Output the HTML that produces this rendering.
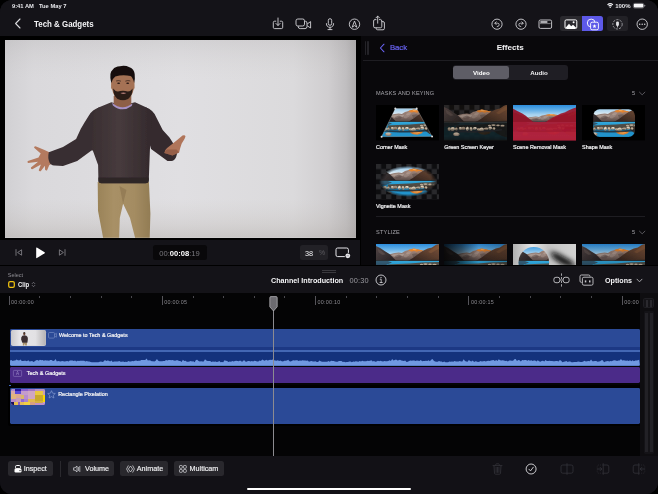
<!DOCTYPE html>
<html lang="en">
<head>
<meta charset="utf-8">
<title>Tech &amp; Gadgets</title>
<style>
html,body{margin:0;padding:0;background:#000;}
body{width:658px;height:494px;overflow:hidden;position:relative;font-family:"Liberation Sans",sans-serif;color:#fff;}
#screen{position:absolute;left:0;top:0;width:658px;height:494px;background:#121116;border-radius:12px;overflow:hidden;will-change:transform;}
.abs{position:absolute;}
.t{position:absolute;white-space:nowrap;line-height:1;}
svg{position:absolute;overflow:visible;}
/* regions */
#topbar{left:0;top:0;width:658px;height:36px;background:#141318;}
#viewerwrap{left:0;top:36px;width:360px;height:204px;background:#000;}
#viewer{left:4.5px;top:40px;width:351.5px;height:197.7px;background:#d9d9db;overflow:hidden;}
#ctrl{left:0;top:239.8px;width:360px;height:25px;background:#141318;}
#panel{left:361px;top:36px;width:297px;height:228.7px;background:#09080b;overflow:hidden;}
#split{left:360px;top:36px;width:1px;height:230px;background:#000;}
#tlhead{left:0;top:266.2px;width:658px;height:27.3px;background:#141318;}
#gap1{left:0;top:264.7px;width:658px;height:1.6px;background:#000;}
#tl{left:0;top:293px;width:658px;height:163.4px;background:#040405;}
#bottom{left:0;top:456.4px;width:658px;height:37.6px;background:#121116;}
.btn{position:absolute;background:#29282d;border-radius:2.5px;height:15px;top:461px;}
.btn .t{font-size:7.2px;top:4.3px;color:#f2f2f4;-webkit-text-stroke:0.15px #f2f2f4;}
.lbl{font-size:5.45px;color:#f0f0f2;font-weight:normal;-webkit-text-stroke:0.22px #f0f0f2;}
.sec{font-size:5.6px;color:#a6a5ab;letter-spacing:0.18px;}
.tick{position:absolute;background:#55545a;width:1px;}
.tc{font-size:5.4px;color:#8b8a90;letter-spacing:0.25px;}
</style>
</head>
<body>
<div id="screen">
<div id="topbar" class="abs"></div>
<div id="viewerwrap" class="abs"></div>
<div id="viewer" class="abs"><!--VIEWER-->
<svg style="left:0;top:0" width="351.5" height="197.7" viewBox="4.5 40 351.5 197.7">
<defs>
<linearGradient id="vbg" x1="0" y1="0" x2="1" y2="0"><stop offset="0" stop-color="#d1d0d3"/><stop offset="0.08" stop-color="#dad9dc"/><stop offset="0.5" stop-color="#e0dfe2"/><stop offset="0.82" stop-color="#dbdadc"/><stop offset="0.92" stop-color="#d0ced0"/><stop offset="0.97" stop-color="#c0bec0"/><stop offset="1" stop-color="#adabac"/></linearGradient>
<linearGradient id="vfl" x1="0" y1="0" x2="0" y2="1"><stop offset="0" stop-color="#9a9696" stop-opacity="0.18"/><stop offset="0.2" stop-color="#c8c4c0" stop-opacity="0"/><stop offset="0.8" stop-color="#c8c4c0" stop-opacity="0"/><stop offset="0.93" stop-color="#b8b2ac" stop-opacity="0.25"/><stop offset="1" stop-color="#aaa49e" stop-opacity="0.4"/></linearGradient>
<linearGradient id="swt" x1="0" y1="0" x2="1" y2="0"><stop offset="0" stop-color="#3a2f32"/><stop offset="0.45" stop-color="#473b3d"/><stop offset="1" stop-color="#33292c"/></linearGradient>
<linearGradient id="pnt" x1="0" y1="0" x2="1" y2="0"><stop offset="0" stop-color="#9a8358"/><stop offset="0.3" stop-color="#a89066"/><stop offset="0.7" stop-color="#a48c62"/><stop offset="1" stop-color="#927c54"/></linearGradient>
<filter id="bl" x="-5%" y="-5%" width="110%" height="110%"><feGaussianBlur stdDeviation="0.45"/></filter>
</defs>
<rect x="4.5" y="40" width="351.5" height="197.7" fill="url(#vbg)"/>
<rect x="4.5" y="40" width="351.5" height="197.7" fill="url(#vfl)"/>
<g filter="url(#bl)">
<!-- pants -->
<path d="M97.2 182 H148.4 L149.9 213.7 L149.2 237.7 H134.6 L129.5 218 L122.6 203.8 L119.3 218 L118.6 237.7 H102.6 L97.5 210.8 Z" fill="url(#pnt)"/>
<path d="M119 186 L122.6 203.8 L126 190 Z" fill="#86704c" opacity="0.55"/>
<!-- left hand -->
<path d="M49.4 152.4 L44 150 L35 146.2 Q33.2 146.2 33.6 147.8 L40.2 153.4 L38 157.4 L27.4 161 Q26.2 162.2 27.6 163 L37.6 161.8 L30.4 167.6 Q30.2 169.4 31.8 169.2 L40.4 164.6 L38.2 170.2 Q38.8 171.8 40.2 171.2 L44.4 165.8 L44.6 169.8 Q45.6 171 46.6 170.2 L48.8 165 L52.4 163.2 Z" fill="#b47a5e"/>
<!-- arms -->
<path d="M99 107.2 Q91.6 109.6 88.4 115.5 L84 122.4 L80.2 129 L75.6 139 L62.5 147 L48.3 152.3 Q47 158 49 162.6 Q50.4 165.6 54 165.4 L62.5 166 L76.7 161 L91 150.5 L97 150 Z" fill="#392e31"/>
<path d="M145 107.2 Q152.8 109.8 155.6 117 L162.2 130 L169 137.4 L176.6 149.6 Q177.4 153 175.6 157 Q173.6 161.6 170 161 L167 161 L150.6 149 L148 140 Z" fill="#342a2d"/>
<!-- right hand -->
<path d="M172 155.4 L163.8 153 Q164.4 149.6 166.6 148 L171.4 144.2 L176.4 140.2 L182 135.4 Q184.8 134.6 185 136.6 L184 139 L181.2 143.6 L179.6 148.4 L178.6 152.6 Z" fill="#b0745a"/>
<path d="M172 155.4 L163.8 153 Q164.6 150.6 166.6 149.4 L176 149.4 L178.6 152.6 Z" fill="#86523e" opacity="0.6"/>
<!-- torso -->
<path d="M110.8 102.3 Q122.5 106 134.5 102.3 L146 107.4 Q151.4 110.4 152 117 L149.4 150 L148.3 180 Q148.3 183.2 145 183.2 H101 Q97.7 183.2 97.9 180 L97.6 165 L91.4 148 L92.8 117 Q92.8 110.4 98 107.4 Z" fill="url(#swt)"/>
<path d="M97.9 177.6 H148.3 V180 Q148.3 183.2 145 183.2 H101 Q97.7 183.2 97.9 180 Z" fill="#2e2528"/>
<!-- neck + collar -->
<path d="M113.2 96 H130.8 V105 Q122 110 113.2 105 Z" fill="#8e5e46"/>
<path d="M111.6 102.8 Q121.6 111.4 132 103.6 L131.2 106 Q121.6 113 112.4 105.4 Z" fill="#a892c6"/>
<!-- head -->
<path d="M110.6 84 Q110.2 74 122.4 73.4 Q134.4 74 134 84 Q134.6 88 133 90 Q131.6 97 126.6 99.6 Q122.4 101 118 99.6 Q113.2 97 111.8 90 Q110 88 110.6 84 Z" fill="#a57254"/>
<path d="M112.6 88.6 Q112.8 96 117 99 Q122.4 101.4 127.6 99 Q132 96 132.2 88.6 Q130.4 91.4 127.4 91.4 Q122.4 90 117.4 91.4 Q114.4 91.4 112.6 88.6 Z" fill="#2b1d19"/>
<path d="M110.8 83 Q108 72.4 112.4 69.4 Q114.6 66.4 119.4 66.2 Q124.6 65 129 67.2 Q133.6 69 134.2 74 Q134.8 78.6 133.6 83 Q132.6 77.8 130 76 Q122.4 74.4 114.8 76.4 Q111.8 78.4 110.8 83 Z" fill="#17100f"/>
<ellipse cx="118.1" cy="83.2" rx="1.5" ry="0.75" fill="#2a1a16"/>
<ellipse cx="127.2" cy="83.2" rx="1.5" ry="0.75" fill="#2a1a16"/>
<path d="M115.6 81 Q118 80 120.4 81.2 M124.8 81.2 Q127.4 80 129.8 81" stroke="#1c1210" stroke-width="0.6" fill="none"/>
<path d="M120 93 Q122.8 92 125.8 93 Q122.8 95 120 93 Z" fill="#b07a74"/>
</g>
</svg>
<!--/VIEWER--></div>
<div id="ctrl" class="abs"></div>
<div id="panel" class="abs"><!--PANEL-->
<svg width="0" height="0" style="left:0;top:0"><defs>
<linearGradient id="mSky" x1="0" y1="0" x2="0" y2="1"><stop offset="0" stop-color="#2a8cdc"/><stop offset="0.3" stop-color="#64b0e6"/><stop offset="0.55" stop-color="#a6d2ee"/><stop offset="1" stop-color="#d6e8f2"/></linearGradient>
<linearGradient id="mSkyP" x1="0" y1="0" x2="0" y2="1"><stop offset="0" stop-color="#6cb4e8"/><stop offset="0.25" stop-color="#a8d2ee"/><stop offset="0.5" stop-color="#d8e8f2"/><stop offset="1" stop-color="#eef2f4"/></linearGradient>
<linearGradient id="mL" x1="0" y1="0" x2="1" y2="1"><stop offset="0" stop-color="#514444"/><stop offset="0.5" stop-color="#3a3233"/><stop offset="1" stop-color="#221d1e"/></linearGradient>
<linearGradient id="mR" x1="1" y1="0" x2="0.2" y2="1"><stop offset="0" stop-color="#7c5238"/><stop offset="0.5" stop-color="#5c3e2e"/><stop offset="1" stop-color="#30221e"/></linearGradient>
<linearGradient id="mC" x1="0" y1="0" x2="0" y2="1"><stop offset="0" stop-color="#a68a7e"/><stop offset="0.55" stop-color="#88726a"/><stop offset="1" stop-color="#4c403e"/></linearGradient>
<linearGradient id="mLake" x1="0" y1="0" x2="0" y2="1"><stop offset="0" stop-color="#32aade"/><stop offset="0.16" stop-color="#2a9cd0"/><stop offset="0.3" stop-color="#1a6a94"/><stop offset="0.5" stop-color="#2090c8"/><stop offset="0.76" stop-color="#2294cc"/><stop offset="0.9" stop-color="#14608c"/><stop offset="1" stop-color="#0a2438"/></linearGradient>
<filter id="mB" x="-3%" y="-3%" width="106%" height="106%"><feGaussianBlur stdDeviation="0.25"/></filter>
<pattern id="chk" width="10.14" height="10.12" patternUnits="userSpaceOnUse"><rect width="10.14" height="10.12" fill="#0d0d0f"/><rect width="5.07" height="5.06" fill="#29292c"/><rect x="5.07" y="5.06" width="5.07" height="5.06" fill="#29292c"/></pattern>
</defs></svg>
<div class="abs" style="left:3.9px;top:5.3px;width:1.6px;height:13.6px;background:#242328;border-radius:0.8px;"></div>
<div class="abs" style="left:6.3px;top:5.3px;width:1.6px;height:13.6px;background:#242328;border-radius:0.8px;"></div>
<svg style="left:18.2px;top:7.2px" width="7" height="10" viewBox="0 0 7 10"><path d="M5 1.2 L1.4 5 L5 8.8" fill="none" stroke="#6a64f5" stroke-width="1.05" stroke-linecap="round" stroke-linejoin="round"/></svg>
<div class="t" style="left:28.9px;top:8.3px;font-size:7.75px;color:#6a64f5;-webkit-text-stroke:0.2px #6a64f5;">Back</div>
<div class="t" style="left:135.7px;top:8.2px;font-size:8.1px;font-weight:bold;color:#f4f4f6;">Effects</div>
<div class="abs" style="left:1.5px;top:23.7px;width:296px;height:0.7px;background:#1e1d22;"></div>
<div class="abs" style="left:91.7px;top:29.1px;width:115.4px;height:14.9px;background:#1f1e24;border-radius:3px;"></div>
<div class="abs" style="left:92.4px;top:30px;width:55.4px;height:13.2px;background:#5e5d66;border-radius:2.4px;"></div>
<div class="t" style="left:92.3px;top:34px;width:56px;text-align:center;font-size:6.2px;font-weight:bold;color:#fff;">Video</div>
<div class="t" style="left:149.5px;top:34px;width:57px;text-align:center;font-size:6.2px;font-weight:bold;color:#f0f0f2;">Audio</div>
<div class="t sec" style="left:15px;top:54.6px;">MASKS AND KEYING</div>
<div class="t sec" style="left:271px;top:54.6px;">5</div>
<svg style="left:277px;top:55.2px" width="8" height="5" viewBox="0 0 8 5"><path d="M1.5 1.2 L4.2 3.8 L6.9 1.2" fill="none" stroke="#7a7980" stroke-width="0.7" stroke-linecap="round" stroke-linejoin="round"/></svg>
<div class="abs" style="left:15px;top:179.6px;width:269.4px;height:0.7px;background:#1e1d22;"></div>
<div class="t sec" style="left:15px;top:193.5px;">STYLIZE</div>
<div class="t sec" style="left:271px;top:193.5px;">5</div>
<svg style="left:277px;top:194.1px" width="8" height="5" viewBox="0 0 8 5"><path d="M1.5 1.2 L4.2 3.8 L6.9 1.2" fill="none" stroke="#7a7980" stroke-width="0.7" stroke-linecap="round" stroke-linejoin="round"/></svg>



<svg style="left:15px;top:69.3px;overflow:hidden" width="63.2" height="35.4" viewBox="0 0 63.2 35.4"><rect width="63.2" height="35.4" fill="#000"/><clipPath id="cm"><path d="M19.3 3.6 L40.7 3.6 L56.1 31.4 L5.6 31.7 Z"/></clipPath><g clip-path="url(#cm)"><g filter="url(#mB)"><rect width="63.2" height="17.5" fill="url(#mSkyP)"/><path d="M10 11 L14.6 10.1 L18.7 9.1 L22.8 8.4 L25.9 9.1 L29 7 L33.2 5.7 L37.8 4.6 L42.5 5.6 L46.6 6.5 L49.5 7.6 L52 9 L54 17.5 H10 Z" fill="url(#mC)"/>
<path d="M15 11 L18.7 9.8 L22.6 9.4 L25.6 10 L28.6 9.4 L27 12 L24 11.6 L21 13 L17.4 12.4 Z" fill="#b5a59c" opacity="0.7"/>
<path d="M27.4 11 L31 8.6 L35 8.8 L33 11.6 L30 13.4 L28 13 Z" fill="#a4928a" opacity="0.55"/>
<path d="M36 10 L40 9.2 L44 10 L41 12.4 L37 13 Z" fill="#5c4c48" opacity="0.6"/>
<path d="M19 12 L23 10.6 L26 12.2 L24 14.4 L20 14.6 Z" fill="#5a4a48" opacity="0.55"/>
<path d="M30 9 L33 7 L36 7.8 L34 9.6 L31 10.6 Z" fill="#c0a89c" opacity="0.45"/>
<path d="M40 7.8 L44 7.4 L47 8.2 L44 10 L41 9.6 Z" fill="#a07860" opacity="0.6"/>
<path d="M32.4 6 L33.6 5.6 L37.8 4.6 L42.5 5.6 L46.6 6.5 L47.6 7.2 L45.6 7.4 L43 7 L40.6 7.7 L38.2 7 L35.6 7.5 L33.8 7 Z" fill="#e4832f"/>
<path d="M36.4 5.2 L37.8 4.8 L41 5.5 L39.6 6.2 L37.4 6.1 Z" fill="#f4a858"/>
<path d="M0 1.9 L4.2 3.9 L9.4 7.5 L13.5 10.1 L17.7 14.3 L20.3 16.8 L20.3 17.5 H0 Z" fill="url(#mL)"/>
<path d="M1.6 4.6 L5.6 7 L9.6 10.2 L6.6 11 L2.6 8.6 Z" fill="#6a5a56" opacity="0.5"/>
<path d="M63.2 0 L60 0.8 L55.9 3.4 L51.8 4.4 L48.6 6 L46.6 7 L43 9.6 L39.6 12 L36.4 14.2 L33.2 16.3 L31 17 L31 17.5 H63.2 Z" fill="url(#mR)"/>
<path d="M60 2.6 L56 5 L52 8 L55 9.2 L59 6.8 L63.2 4.8 V1.6 Z" fill="#90603e" opacity="0.45"/>
<path d="M0 15.9 L20 16.3 L34 16.4 L63.2 15.8 V17.6 H0 Z" fill="#2b2523"/><g><rect x="0" y="16.9" width="63.2" height="18.5" fill="url(#mLake)"/>
<path d="M0 17 L12 17 L16 18.6 L10 21 L0 22 Z" fill="#32262a" opacity="0.6"/>
<path d="M12 20.6 L22 20 L34 19.4 L46 18.6 L63.2 18 V24 H12 Z" fill="#54463a" opacity="0.92"/>
<path d="M46 22 H63.2 V32.6 L58 31 L53 28.6 L49 25.6 Z" fill="#3a2c24" opacity="0.92"/>
<path d="M33.6 26.6 L37 26.2 L42 26.3 L47.4 26.6 L45.4 28.6 L41.4 29.8 L37.4 29.2 L34.8 28 Z" fill="#e0802e"/>
<path d="M36.4 26.8 L41 26.6 L44.4 27.2 L41.4 28.5 L38.2 28.3 Z" fill="#f2a450"/></g><path d="M3 24.8 L10 25.2 L20 25.6 L30 25.8 L40 25.6 L50 24.8 L58 23.8 L58 25.4 L50 26.6 L40 27.2 L32 27.6 L24 27.4 L14 27 L6 26.4 Z" fill="#20262c" opacity="0.8"/>
<ellipse cx="5.18" cy="24.06" rx="1.50" ry="1.72" fill="#a89884" transform="rotate(-11 5.2 24.06)"/>
<ellipse cx="4.90" cy="25.09" rx="1.35" ry="0.69" fill="#4e443c" opacity="0.75"/>
<ellipse cx="8.60" cy="23.91" rx="2.25" ry="1.83" fill="#cfc0aa" transform="rotate(-11 8.6 23.91)"/>
<ellipse cx="8.30" cy="25.01" rx="2.03" ry="0.73" fill="#4e443c" opacity="0.75"/>
<ellipse cx="12.26" cy="24.00" rx="1.30" ry="1.43" fill="#b4a48e" transform="rotate(12 12.6 24.00)"/>
<ellipse cx="12.30" cy="24.86" rx="1.17" ry="0.57" fill="#4e443c" opacity="0.75"/>
<ellipse cx="16.40" cy="23.35" rx="1.58" ry="1.31" fill="#d8cab4" transform="rotate(10 16.0 23.35)"/>
<ellipse cx="15.70" cy="24.14" rx="1.42" ry="0.52" fill="#4e443c" opacity="0.75"/>
<ellipse cx="19.26" cy="23.34" rx="2.35" ry="1.65" fill="#9e8e7c" transform="rotate(-0 19.4 23.34)"/>
<ellipse cx="19.10" cy="24.33" rx="2.12" ry="0.66" fill="#4e443c" opacity="0.75"/>
<ellipse cx="23.32" cy="23.74" rx="1.44" ry="1.96" fill="#e2d6c2" transform="rotate(13 23.6 23.74)"/>
<ellipse cx="23.30" cy="24.92" rx="1.30" ry="0.78" fill="#4e443c" opacity="0.75"/>
<ellipse cx="27.04" cy="23.84" rx="1.45" ry="1.94" fill="#cbbca6" transform="rotate(-6 27.0 23.84)"/>
<ellipse cx="26.70" cy="25.00" rx="1.30" ry="0.77" fill="#4e443c" opacity="0.75"/>
<ellipse cx="30.89" cy="23.34" rx="1.88" ry="1.27" fill="#e8ddca" transform="rotate(-11 30.6 23.34)"/>
<ellipse cx="30.30" cy="24.11" rx="1.69" ry="0.51" fill="#4e443c" opacity="0.75"/>
<ellipse cx="34.92" cy="24.46" rx="2.24" ry="1.29" fill="#bfae98" transform="rotate(10 34.6 24.46)"/>
<ellipse cx="34.30" cy="25.24" rx="2.01" ry="0.52" fill="#4e443c" opacity="0.75"/>
<ellipse cx="37.70" cy="24.18" rx="2.22" ry="1.62" fill="#d6c8b2" transform="rotate(-1 38.0 24.18)"/>
<ellipse cx="37.70" cy="25.15" rx="1.99" ry="0.65" fill="#4e443c" opacity="0.75"/>
<ellipse cx="42.11" cy="23.71" rx="2.29" ry="1.28" fill="#b0a08c" transform="rotate(-4 41.8 23.71)"/>
<ellipse cx="41.50" cy="24.48" rx="2.06" ry="0.51" fill="#4e443c" opacity="0.75"/>
<ellipse cx="46.20" cy="23.06" rx="1.74" ry="1.51" fill="#dcd0bc" transform="rotate(-5 45.8 23.06)"/>
<ellipse cx="45.50" cy="23.97" rx="1.56" ry="0.60" fill="#4e443c" opacity="0.75"/>
<ellipse cx="49.99" cy="23.46" rx="1.33" ry="1.18" fill="#c4b49e" transform="rotate(-0 49.6 23.46)"/>
<ellipse cx="49.30" cy="24.17" rx="1.20" ry="0.47" fill="#4e443c" opacity="0.75"/>
<ellipse cx="45.5" cy="20.6" rx="1.6" ry="0.9" fill="#b8a894"/>
<ellipse cx="49.5" cy="20.1" rx="2.2" ry="0.9" fill="#b8a894"/>
<ellipse cx="54" cy="20.3" rx="1.8" ry="0.9" fill="#b8a894"/>
<ellipse cx="58.5" cy="20.7" rx="2.1" ry="0.9" fill="#b8a894"/>
<ellipse cx="12.4" cy="29.2" rx="3.2" ry="1.8" fill="#8c7e72"/><ellipse cx="12.2" cy="28.7" rx="2.5" ry="1.1" fill="#c4b4a0"/></g></g><path d="M19.3 3.6 L40.7 3.6 L56.1 31.4 L5.6 31.7 Z" fill="none" stroke="#cfcfcf" stroke-width="0.3"/><circle cx="19.3" cy="3.6" r="1" fill="#dcdcdc"/><circle cx="40.7" cy="3.6" r="1" fill="#dcdcdc"/><circle cx="56.1" cy="31.4" r="1" fill="#dcdcdc"/><circle cx="5.6" cy="31.7" r="1" fill="#dcdcdc"/></svg>
<div class="t lbl" style="left:15px;top:108.8px;">Corner Mask</div>
<svg style="left:83.2px;top:69.3px;overflow:hidden" width="63.2" height="35.4" viewBox="0 0 63.2 35.4"><rect width="63.2" height="35.4" fill="url(#chk)"/><rect y="16.9" width="63.2" height="18.5" fill="#0e1416" opacity="0.9"/><g filter="url(#mB)"><path d="M10 11 L14.6 10.1 L18.7 9.1 L22.8 8.4 L25.9 9.1 L29 7 L33.2 5.7 L37.8 4.6 L42.5 5.6 L46.6 6.5 L49.5 7.6 L52 9 L54 17.5 H10 Z" fill="url(#mC)"/>
<path d="M15 11 L18.7 9.8 L22.6 9.4 L25.6 10 L28.6 9.4 L27 12 L24 11.6 L21 13 L17.4 12.4 Z" fill="#b5a59c" opacity="0.7"/>
<path d="M27.4 11 L31 8.6 L35 8.8 L33 11.6 L30 13.4 L28 13 Z" fill="#a4928a" opacity="0.55"/>
<path d="M36 10 L40 9.2 L44 10 L41 12.4 L37 13 Z" fill="#5c4c48" opacity="0.6"/>
<path d="M19 12 L23 10.6 L26 12.2 L24 14.4 L20 14.6 Z" fill="#5a4a48" opacity="0.55"/>
<path d="M30 9 L33 7 L36 7.8 L34 9.6 L31 10.6 Z" fill="#c0a89c" opacity="0.45"/>
<path d="M40 7.8 L44 7.4 L47 8.2 L44 10 L41 9.6 Z" fill="#a07860" opacity="0.6"/>
<path d="M32.4 6 L33.6 5.6 L37.8 4.6 L42.5 5.6 L46.6 6.5 L47.6 7.2 L45.6 7.4 L43 7 L40.6 7.7 L38.2 7 L35.6 7.5 L33.8 7 Z" fill="#e4832f"/>
<path d="M36.4 5.2 L37.8 4.8 L41 5.5 L39.6 6.2 L37.4 6.1 Z" fill="#f4a858"/>
<path d="M0 1.9 L4.2 3.9 L9.4 7.5 L13.5 10.1 L17.7 14.3 L20.3 16.8 L20.3 17.5 H0 Z" fill="url(#mL)"/>
<path d="M1.6 4.6 L5.6 7 L9.6 10.2 L6.6 11 L2.6 8.6 Z" fill="#6a5a56" opacity="0.5"/>
<path d="M63.2 0 L60 0.8 L55.9 3.4 L51.8 4.4 L48.6 6 L46.6 7 L43 9.6 L39.6 12 L36.4 14.2 L33.2 16.3 L31 17 L31 17.5 H63.2 Z" fill="url(#mR)"/>
<path d="M60 2.6 L56 5 L52 8 L55 9.2 L59 6.8 L63.2 4.8 V1.6 Z" fill="#90603e" opacity="0.45"/>
<path d="M0 15.9 L20 16.3 L34 16.4 L63.2 15.8 V17.6 H0 Z" fill="#2b2523"/><g opacity="0.13"><rect x="0" y="16.9" width="63.2" height="18.5" fill="url(#mLake)"/>
<path d="M0 17 L12 17 L16 18.6 L10 21 L0 22 Z" fill="#32262a" opacity="0.6"/>
<path d="M12 20.6 L22 20 L34 19.4 L46 18.6 L63.2 18 V24 H12 Z" fill="#54463a" opacity="0.92"/>
<path d="M46 22 H63.2 V32.6 L58 31 L53 28.6 L49 25.6 Z" fill="#3a2c24" opacity="0.92"/>
<path d="M33.6 26.6 L37 26.2 L42 26.3 L47.4 26.6 L45.4 28.6 L41.4 29.8 L37.4 29.2 L34.8 28 Z" fill="#e0802e"/>
<path d="M36.4 26.8 L41 26.6 L44.4 27.2 L41.4 28.5 L38.2 28.3 Z" fill="#f2a450"/></g><path d="M3 24.8 L10 25.2 L20 25.6 L30 25.8 L40 25.6 L50 24.8 L58 23.8 L58 25.4 L50 26.6 L40 27.2 L32 27.6 L24 27.4 L14 27 L6 26.4 Z" fill="#20262c" opacity="0.8"/>
<ellipse cx="5.18" cy="24.06" rx="1.50" ry="1.72" fill="#a89884" transform="rotate(-11 5.2 24.06)"/>
<ellipse cx="4.90" cy="25.09" rx="1.35" ry="0.69" fill="#4e443c" opacity="0.75"/>
<ellipse cx="8.60" cy="23.91" rx="2.25" ry="1.83" fill="#cfc0aa" transform="rotate(-11 8.6 23.91)"/>
<ellipse cx="8.30" cy="25.01" rx="2.03" ry="0.73" fill="#4e443c" opacity="0.75"/>
<ellipse cx="12.26" cy="24.00" rx="1.30" ry="1.43" fill="#b4a48e" transform="rotate(12 12.6 24.00)"/>
<ellipse cx="12.30" cy="24.86" rx="1.17" ry="0.57" fill="#4e443c" opacity="0.75"/>
<ellipse cx="16.40" cy="23.35" rx="1.58" ry="1.31" fill="#d8cab4" transform="rotate(10 16.0 23.35)"/>
<ellipse cx="15.70" cy="24.14" rx="1.42" ry="0.52" fill="#4e443c" opacity="0.75"/>
<ellipse cx="19.26" cy="23.34" rx="2.35" ry="1.65" fill="#9e8e7c" transform="rotate(-0 19.4 23.34)"/>
<ellipse cx="19.10" cy="24.33" rx="2.12" ry="0.66" fill="#4e443c" opacity="0.75"/>
<ellipse cx="23.32" cy="23.74" rx="1.44" ry="1.96" fill="#e2d6c2" transform="rotate(13 23.6 23.74)"/>
<ellipse cx="23.30" cy="24.92" rx="1.30" ry="0.78" fill="#4e443c" opacity="0.75"/>
<ellipse cx="27.04" cy="23.84" rx="1.45" ry="1.94" fill="#cbbca6" transform="rotate(-6 27.0 23.84)"/>
<ellipse cx="26.70" cy="25.00" rx="1.30" ry="0.77" fill="#4e443c" opacity="0.75"/>
<ellipse cx="30.89" cy="23.34" rx="1.88" ry="1.27" fill="#e8ddca" transform="rotate(-11 30.6 23.34)"/>
<ellipse cx="30.30" cy="24.11" rx="1.69" ry="0.51" fill="#4e443c" opacity="0.75"/>
<ellipse cx="34.92" cy="24.46" rx="2.24" ry="1.29" fill="#bfae98" transform="rotate(10 34.6 24.46)"/>
<ellipse cx="34.30" cy="25.24" rx="2.01" ry="0.52" fill="#4e443c" opacity="0.75"/>
<ellipse cx="37.70" cy="24.18" rx="2.22" ry="1.62" fill="#d6c8b2" transform="rotate(-1 38.0 24.18)"/>
<ellipse cx="37.70" cy="25.15" rx="1.99" ry="0.65" fill="#4e443c" opacity="0.75"/>
<ellipse cx="42.11" cy="23.71" rx="2.29" ry="1.28" fill="#b0a08c" transform="rotate(-4 41.8 23.71)"/>
<ellipse cx="41.50" cy="24.48" rx="2.06" ry="0.51" fill="#4e443c" opacity="0.75"/>
<ellipse cx="46.20" cy="23.06" rx="1.74" ry="1.51" fill="#dcd0bc" transform="rotate(-5 45.8 23.06)"/>
<ellipse cx="45.50" cy="23.97" rx="1.56" ry="0.60" fill="#4e443c" opacity="0.75"/>
<ellipse cx="49.99" cy="23.46" rx="1.33" ry="1.18" fill="#c4b49e" transform="rotate(-0 49.6 23.46)"/>
<ellipse cx="49.30" cy="24.17" rx="1.20" ry="0.47" fill="#4e443c" opacity="0.75"/>
<ellipse cx="45.5" cy="20.6" rx="1.6" ry="0.9" fill="#b8a894"/>
<ellipse cx="49.5" cy="20.1" rx="2.2" ry="0.9" fill="#b8a894"/>
<ellipse cx="54" cy="20.3" rx="1.8" ry="0.9" fill="#b8a894"/>
<ellipse cx="58.5" cy="20.7" rx="2.1" ry="0.9" fill="#b8a894"/>
<ellipse cx="12.4" cy="29.2" rx="3.2" ry="1.8" fill="#8c7e72"/><ellipse cx="12.2" cy="28.7" rx="2.5" ry="1.1" fill="#c4b4a0"/></g><rect width="63.2" height="35.4" fill="#2a1810" opacity="0.15"/></svg>
<div class="t lbl" style="left:83.2px;top:108.8px;">Green Screen Keyer</div>
<svg style="left:152px;top:69.3px;overflow:hidden" width="63.2" height="35.4" viewBox="0 0 63.2 35.4"><g filter="url(#mB)"><rect width="63.2" height="17.5" fill="url(#mSky)"/><g transform="translate(0 6) scale(1 0.65)"><path d="M10 11 L14.6 10.1 L18.7 9.1 L22.8 8.4 L25.9 9.1 L29 7 L33.2 5.7 L37.8 4.6 L42.5 5.6 L46.6 6.5 L49.5 7.6 L52 9 L54 17.5 H10 Z" fill="url(#mC)"/>
<path d="M15 11 L18.7 9.8 L22.6 9.4 L25.6 10 L28.6 9.4 L27 12 L24 11.6 L21 13 L17.4 12.4 Z" fill="#b5a59c" opacity="0.7"/>
<path d="M27.4 11 L31 8.6 L35 8.8 L33 11.6 L30 13.4 L28 13 Z" fill="#a4928a" opacity="0.55"/>
<path d="M36 10 L40 9.2 L44 10 L41 12.4 L37 13 Z" fill="#5c4c48" opacity="0.6"/>
<path d="M19 12 L23 10.6 L26 12.2 L24 14.4 L20 14.6 Z" fill="#5a4a48" opacity="0.55"/>
<path d="M30 9 L33 7 L36 7.8 L34 9.6 L31 10.6 Z" fill="#c0a89c" opacity="0.45"/>
<path d="M40 7.8 L44 7.4 L47 8.2 L44 10 L41 9.6 Z" fill="#a07860" opacity="0.6"/>
<path d="M32.4 6 L33.6 5.6 L37.8 4.6 L42.5 5.6 L46.6 6.5 L47.6 7.2 L45.6 7.4 L43 7 L40.6 7.7 L38.2 7 L35.6 7.5 L33.8 7 Z" fill="#e4832f"/>
<path d="M36.4 5.2 L37.8 4.8 L41 5.5 L39.6 6.2 L37.4 6.1 Z" fill="#f4a858"/>
<path d="M0 1.9 L4.2 3.9 L9.4 7.5 L13.5 10.1 L17.7 14.3 L20.3 16.8 L20.3 17.5 H0 Z" fill="url(#mL)"/>
<path d="M1.6 4.6 L5.6 7 L9.6 10.2 L6.6 11 L2.6 8.6 Z" fill="#6a5a56" opacity="0.5"/>
<path d="M63.2 0 L60 0.8 L55.9 3.4 L51.8 4.4 L48.6 6 L46.6 7 L43 9.6 L39.6 12 L36.4 14.2 L33.2 16.3 L31 17 L31 17.5 H63.2 Z" fill="url(#mR)"/>
<path d="M60 2.6 L56 5 L52 8 L55 9.2 L59 6.8 L63.2 4.8 V1.6 Z" fill="#90603e" opacity="0.45"/>
<path d="M0 15.9 L20 16.3 L34 16.4 L63.2 15.8 V17.6 H0 Z" fill="#2b2523"/></g><g><rect x="0" y="16.9" width="63.2" height="18.5" fill="url(#mLake)"/>
<path d="M0 17 L12 17 L16 18.6 L10 21 L0 22 Z" fill="#32262a" opacity="0.6"/>
<path d="M12 20.6 L22 20 L34 19.4 L46 18.6 L63.2 18 V24 H12 Z" fill="#54463a" opacity="0.92"/>
<path d="M46 22 H63.2 V32.6 L58 31 L53 28.6 L49 25.6 Z" fill="#3a2c24" opacity="0.92"/>
<path d="M33.6 26.6 L37 26.2 L42 26.3 L47.4 26.6 L45.4 28.6 L41.4 29.8 L37.4 29.2 L34.8 28 Z" fill="#e0802e"/>
<path d="M36.4 26.8 L41 26.6 L44.4 27.2 L41.4 28.5 L38.2 28.3 Z" fill="#f2a450"/></g><path d="M3 24.8 L10 25.2 L20 25.6 L30 25.8 L40 25.6 L50 24.8 L58 23.8 L58 25.4 L50 26.6 L40 27.2 L32 27.6 L24 27.4 L14 27 L6 26.4 Z" fill="#20262c" opacity="0.8"/>
<ellipse cx="5.18" cy="24.06" rx="1.50" ry="1.72" fill="#a89884" transform="rotate(-11 5.2 24.06)"/>
<ellipse cx="4.90" cy="25.09" rx="1.35" ry="0.69" fill="#4e443c" opacity="0.75"/>
<ellipse cx="8.60" cy="23.91" rx="2.25" ry="1.83" fill="#cfc0aa" transform="rotate(-11 8.6 23.91)"/>
<ellipse cx="8.30" cy="25.01" rx="2.03" ry="0.73" fill="#4e443c" opacity="0.75"/>
<ellipse cx="12.26" cy="24.00" rx="1.30" ry="1.43" fill="#b4a48e" transform="rotate(12 12.6 24.00)"/>
<ellipse cx="12.30" cy="24.86" rx="1.17" ry="0.57" fill="#4e443c" opacity="0.75"/>
<ellipse cx="16.40" cy="23.35" rx="1.58" ry="1.31" fill="#d8cab4" transform="rotate(10 16.0 23.35)"/>
<ellipse cx="15.70" cy="24.14" rx="1.42" ry="0.52" fill="#4e443c" opacity="0.75"/>
<ellipse cx="19.26" cy="23.34" rx="2.35" ry="1.65" fill="#9e8e7c" transform="rotate(-0 19.4 23.34)"/>
<ellipse cx="19.10" cy="24.33" rx="2.12" ry="0.66" fill="#4e443c" opacity="0.75"/>
<ellipse cx="23.32" cy="23.74" rx="1.44" ry="1.96" fill="#e2d6c2" transform="rotate(13 23.6 23.74)"/>
<ellipse cx="23.30" cy="24.92" rx="1.30" ry="0.78" fill="#4e443c" opacity="0.75"/>
<ellipse cx="27.04" cy="23.84" rx="1.45" ry="1.94" fill="#cbbca6" transform="rotate(-6 27.0 23.84)"/>
<ellipse cx="26.70" cy="25.00" rx="1.30" ry="0.77" fill="#4e443c" opacity="0.75"/>
<ellipse cx="30.89" cy="23.34" rx="1.88" ry="1.27" fill="#e8ddca" transform="rotate(-11 30.6 23.34)"/>
<ellipse cx="30.30" cy="24.11" rx="1.69" ry="0.51" fill="#4e443c" opacity="0.75"/>
<ellipse cx="34.92" cy="24.46" rx="2.24" ry="1.29" fill="#bfae98" transform="rotate(10 34.6 24.46)"/>
<ellipse cx="34.30" cy="25.24" rx="2.01" ry="0.52" fill="#4e443c" opacity="0.75"/>
<ellipse cx="37.70" cy="24.18" rx="2.22" ry="1.62" fill="#d6c8b2" transform="rotate(-1 38.0 24.18)"/>
<ellipse cx="37.70" cy="25.15" rx="1.99" ry="0.65" fill="#4e443c" opacity="0.75"/>
<ellipse cx="42.11" cy="23.71" rx="2.29" ry="1.28" fill="#b0a08c" transform="rotate(-4 41.8 23.71)"/>
<ellipse cx="41.50" cy="24.48" rx="2.06" ry="0.51" fill="#4e443c" opacity="0.75"/>
<ellipse cx="46.20" cy="23.06" rx="1.74" ry="1.51" fill="#dcd0bc" transform="rotate(-5 45.8 23.06)"/>
<ellipse cx="45.50" cy="23.97" rx="1.56" ry="0.60" fill="#4e443c" opacity="0.75"/>
<ellipse cx="49.99" cy="23.46" rx="1.33" ry="1.18" fill="#c4b49e" transform="rotate(-0 49.6 23.46)"/>
<ellipse cx="49.30" cy="24.17" rx="1.20" ry="0.47" fill="#4e443c" opacity="0.75"/>
<ellipse cx="45.5" cy="20.6" rx="1.6" ry="0.9" fill="#b8a894"/>
<ellipse cx="49.5" cy="20.1" rx="2.2" ry="0.9" fill="#b8a894"/>
<ellipse cx="54" cy="20.3" rx="1.8" ry="0.9" fill="#b8a894"/>
<ellipse cx="58.5" cy="20.7" rx="2.1" ry="0.9" fill="#b8a894"/>
<ellipse cx="12.4" cy="29.2" rx="3.2" ry="1.8" fill="#8c7e72"/><ellipse cx="12.2" cy="28.7" rx="2.5" ry="1.1" fill="#c4b4a0"/><path d="M0 3.7 L4.6 6.2 L9.2 8.5 L13 11 L16.8 14.6 L20 16.8 L26 16.9 L33.2 16.8 L36 14.8 L40 12.4 L44 10.6 L48 8.6 L52 7.4 L56 5.2 L60 3.6 L63.2 2.6 V35.4 H0 Z" fill="#a8182f" opacity="0.9"/><path d="M0 3.7 L4.6 6.2 L9.2 8.5 L13 11 L16.8 14.6 L20 16.8 H0 Z" fill="#7e1022" opacity="0.4"/><path d="M63.2 2.6 L56 5.2 L48 8.6 L40 12.4 L33.2 16.8 H63.2 Z" fill="#7e1022" opacity="0.25"/><rect y="17" width="63.2" height="18.4" fill="#b41a34" opacity="0.35"/><rect y="27" width="63.2" height="8.4" fill="#c83048" opacity="0.3"/></g></svg>
<div class="t lbl" style="left:152px;top:108.8px;">Scene Removal Mask</div>
<svg style="left:221px;top:69.3px;overflow:hidden" width="63.2" height="35.4" viewBox="0 0 63.2 35.4"><rect width="63.2" height="35.4" fill="#000"/><clipPath id="sm"><rect x="11.2" y="4.3" width="41.8" height="27.6" rx="6.5"/></clipPath><g clip-path="url(#sm)"><g filter="url(#mB)"><rect width="63.2" height="17.5" fill="url(#mSkyP)"/><path d="M10 11 L14.6 10.1 L18.7 9.1 L22.8 8.4 L25.9 9.1 L29 7 L33.2 5.7 L37.8 4.6 L42.5 5.6 L46.6 6.5 L49.5 7.6 L52 9 L54 17.5 H10 Z" fill="url(#mC)"/>
<path d="M15 11 L18.7 9.8 L22.6 9.4 L25.6 10 L28.6 9.4 L27 12 L24 11.6 L21 13 L17.4 12.4 Z" fill="#b5a59c" opacity="0.7"/>
<path d="M27.4 11 L31 8.6 L35 8.8 L33 11.6 L30 13.4 L28 13 Z" fill="#a4928a" opacity="0.55"/>
<path d="M36 10 L40 9.2 L44 10 L41 12.4 L37 13 Z" fill="#5c4c48" opacity="0.6"/>
<path d="M19 12 L23 10.6 L26 12.2 L24 14.4 L20 14.6 Z" fill="#5a4a48" opacity="0.55"/>
<path d="M30 9 L33 7 L36 7.8 L34 9.6 L31 10.6 Z" fill="#c0a89c" opacity="0.45"/>
<path d="M40 7.8 L44 7.4 L47 8.2 L44 10 L41 9.6 Z" fill="#a07860" opacity="0.6"/>
<path d="M32.4 6 L33.6 5.6 L37.8 4.6 L42.5 5.6 L46.6 6.5 L47.6 7.2 L45.6 7.4 L43 7 L40.6 7.7 L38.2 7 L35.6 7.5 L33.8 7 Z" fill="#e4832f"/>
<path d="M36.4 5.2 L37.8 4.8 L41 5.5 L39.6 6.2 L37.4 6.1 Z" fill="#f4a858"/>
<path d="M0 1.9 L4.2 3.9 L9.4 7.5 L13.5 10.1 L17.7 14.3 L20.3 16.8 L20.3 17.5 H0 Z" fill="url(#mL)"/>
<path d="M1.6 4.6 L5.6 7 L9.6 10.2 L6.6 11 L2.6 8.6 Z" fill="#6a5a56" opacity="0.5"/>
<path d="M63.2 0 L60 0.8 L55.9 3.4 L51.8 4.4 L48.6 6 L46.6 7 L43 9.6 L39.6 12 L36.4 14.2 L33.2 16.3 L31 17 L31 17.5 H63.2 Z" fill="url(#mR)"/>
<path d="M60 2.6 L56 5 L52 8 L55 9.2 L59 6.8 L63.2 4.8 V1.6 Z" fill="#90603e" opacity="0.45"/>
<path d="M0 15.9 L20 16.3 L34 16.4 L63.2 15.8 V17.6 H0 Z" fill="#2b2523"/><g><rect x="0" y="16.9" width="63.2" height="18.5" fill="url(#mLake)"/>
<path d="M0 17 L12 17 L16 18.6 L10 21 L0 22 Z" fill="#32262a" opacity="0.6"/>
<path d="M12 20.6 L22 20 L34 19.4 L46 18.6 L63.2 18 V24 H12 Z" fill="#54463a" opacity="0.92"/>
<path d="M46 22 H63.2 V32.6 L58 31 L53 28.6 L49 25.6 Z" fill="#3a2c24" opacity="0.92"/>
<path d="M33.6 26.6 L37 26.2 L42 26.3 L47.4 26.6 L45.4 28.6 L41.4 29.8 L37.4 29.2 L34.8 28 Z" fill="#e0802e"/>
<path d="M36.4 26.8 L41 26.6 L44.4 27.2 L41.4 28.5 L38.2 28.3 Z" fill="#f2a450"/></g><path d="M3 24.8 L10 25.2 L20 25.6 L30 25.8 L40 25.6 L50 24.8 L58 23.8 L58 25.4 L50 26.6 L40 27.2 L32 27.6 L24 27.4 L14 27 L6 26.4 Z" fill="#20262c" opacity="0.8"/>
<ellipse cx="5.18" cy="24.06" rx="1.50" ry="1.72" fill="#a89884" transform="rotate(-11 5.2 24.06)"/>
<ellipse cx="4.90" cy="25.09" rx="1.35" ry="0.69" fill="#4e443c" opacity="0.75"/>
<ellipse cx="8.60" cy="23.91" rx="2.25" ry="1.83" fill="#cfc0aa" transform="rotate(-11 8.6 23.91)"/>
<ellipse cx="8.30" cy="25.01" rx="2.03" ry="0.73" fill="#4e443c" opacity="0.75"/>
<ellipse cx="12.26" cy="24.00" rx="1.30" ry="1.43" fill="#b4a48e" transform="rotate(12 12.6 24.00)"/>
<ellipse cx="12.30" cy="24.86" rx="1.17" ry="0.57" fill="#4e443c" opacity="0.75"/>
<ellipse cx="16.40" cy="23.35" rx="1.58" ry="1.31" fill="#d8cab4" transform="rotate(10 16.0 23.35)"/>
<ellipse cx="15.70" cy="24.14" rx="1.42" ry="0.52" fill="#4e443c" opacity="0.75"/>
<ellipse cx="19.26" cy="23.34" rx="2.35" ry="1.65" fill="#9e8e7c" transform="rotate(-0 19.4 23.34)"/>
<ellipse cx="19.10" cy="24.33" rx="2.12" ry="0.66" fill="#4e443c" opacity="0.75"/>
<ellipse cx="23.32" cy="23.74" rx="1.44" ry="1.96" fill="#e2d6c2" transform="rotate(13 23.6 23.74)"/>
<ellipse cx="23.30" cy="24.92" rx="1.30" ry="0.78" fill="#4e443c" opacity="0.75"/>
<ellipse cx="27.04" cy="23.84" rx="1.45" ry="1.94" fill="#cbbca6" transform="rotate(-6 27.0 23.84)"/>
<ellipse cx="26.70" cy="25.00" rx="1.30" ry="0.77" fill="#4e443c" opacity="0.75"/>
<ellipse cx="30.89" cy="23.34" rx="1.88" ry="1.27" fill="#e8ddca" transform="rotate(-11 30.6 23.34)"/>
<ellipse cx="30.30" cy="24.11" rx="1.69" ry="0.51" fill="#4e443c" opacity="0.75"/>
<ellipse cx="34.92" cy="24.46" rx="2.24" ry="1.29" fill="#bfae98" transform="rotate(10 34.6 24.46)"/>
<ellipse cx="34.30" cy="25.24" rx="2.01" ry="0.52" fill="#4e443c" opacity="0.75"/>
<ellipse cx="37.70" cy="24.18" rx="2.22" ry="1.62" fill="#d6c8b2" transform="rotate(-1 38.0 24.18)"/>
<ellipse cx="37.70" cy="25.15" rx="1.99" ry="0.65" fill="#4e443c" opacity="0.75"/>
<ellipse cx="42.11" cy="23.71" rx="2.29" ry="1.28" fill="#b0a08c" transform="rotate(-4 41.8 23.71)"/>
<ellipse cx="41.50" cy="24.48" rx="2.06" ry="0.51" fill="#4e443c" opacity="0.75"/>
<ellipse cx="46.20" cy="23.06" rx="1.74" ry="1.51" fill="#dcd0bc" transform="rotate(-5 45.8 23.06)"/>
<ellipse cx="45.50" cy="23.97" rx="1.56" ry="0.60" fill="#4e443c" opacity="0.75"/>
<ellipse cx="49.99" cy="23.46" rx="1.33" ry="1.18" fill="#c4b49e" transform="rotate(-0 49.6 23.46)"/>
<ellipse cx="49.30" cy="24.17" rx="1.20" ry="0.47" fill="#4e443c" opacity="0.75"/>
<ellipse cx="45.5" cy="20.6" rx="1.6" ry="0.9" fill="#b8a894"/>
<ellipse cx="49.5" cy="20.1" rx="2.2" ry="0.9" fill="#b8a894"/>
<ellipse cx="54" cy="20.3" rx="1.8" ry="0.9" fill="#b8a894"/>
<ellipse cx="58.5" cy="20.7" rx="2.1" ry="0.9" fill="#b8a894"/>
<ellipse cx="12.4" cy="29.2" rx="3.2" ry="1.8" fill="#8c7e72"/><ellipse cx="12.2" cy="28.7" rx="2.5" ry="1.1" fill="#c4b4a0"/></g></g></svg>
<div class="t lbl" style="left:221px;top:108.8px;">Shape Mask</div>
<svg style="left:15px;top:128.4px;overflow:hidden" width="63.2" height="35.4" viewBox="0 0 63.2 35.4"><rect width="63.2" height="35.4" fill="url(#chk)"/><defs><radialGradient id="vg" cx="0.5" cy="0.5" r="0.5"><stop offset="0.8" stop-color="#fff"/><stop offset="1" stop-color="#fff" stop-opacity="0"/></radialGradient><mask id="vm"><ellipse cx="31.8" cy="17.4" rx="29" ry="15.6" fill="url(#vg)"/></mask></defs><g mask="url(#vm)"><g filter="url(#mB)"><rect width="63.2" height="17.5" fill="url(#mSkyP)"/><path d="M10 11 L14.6 10.1 L18.7 9.1 L22.8 8.4 L25.9 9.1 L29 7 L33.2 5.7 L37.8 4.6 L42.5 5.6 L46.6 6.5 L49.5 7.6 L52 9 L54 17.5 H10 Z" fill="url(#mC)"/>
<path d="M15 11 L18.7 9.8 L22.6 9.4 L25.6 10 L28.6 9.4 L27 12 L24 11.6 L21 13 L17.4 12.4 Z" fill="#b5a59c" opacity="0.7"/>
<path d="M27.4 11 L31 8.6 L35 8.8 L33 11.6 L30 13.4 L28 13 Z" fill="#a4928a" opacity="0.55"/>
<path d="M36 10 L40 9.2 L44 10 L41 12.4 L37 13 Z" fill="#5c4c48" opacity="0.6"/>
<path d="M19 12 L23 10.6 L26 12.2 L24 14.4 L20 14.6 Z" fill="#5a4a48" opacity="0.55"/>
<path d="M30 9 L33 7 L36 7.8 L34 9.6 L31 10.6 Z" fill="#c0a89c" opacity="0.45"/>
<path d="M40 7.8 L44 7.4 L47 8.2 L44 10 L41 9.6 Z" fill="#a07860" opacity="0.6"/>
<path d="M32.4 6 L33.6 5.6 L37.8 4.6 L42.5 5.6 L46.6 6.5 L47.6 7.2 L45.6 7.4 L43 7 L40.6 7.7 L38.2 7 L35.6 7.5 L33.8 7 Z" fill="#e4832f"/>
<path d="M36.4 5.2 L37.8 4.8 L41 5.5 L39.6 6.2 L37.4 6.1 Z" fill="#f4a858"/>
<path d="M0 1.9 L4.2 3.9 L9.4 7.5 L13.5 10.1 L17.7 14.3 L20.3 16.8 L20.3 17.5 H0 Z" fill="url(#mL)"/>
<path d="M1.6 4.6 L5.6 7 L9.6 10.2 L6.6 11 L2.6 8.6 Z" fill="#6a5a56" opacity="0.5"/>
<path d="M63.2 0 L60 0.8 L55.9 3.4 L51.8 4.4 L48.6 6 L46.6 7 L43 9.6 L39.6 12 L36.4 14.2 L33.2 16.3 L31 17 L31 17.5 H63.2 Z" fill="url(#mR)"/>
<path d="M60 2.6 L56 5 L52 8 L55 9.2 L59 6.8 L63.2 4.8 V1.6 Z" fill="#90603e" opacity="0.45"/>
<path d="M0 15.9 L20 16.3 L34 16.4 L63.2 15.8 V17.6 H0 Z" fill="#2b2523"/><g><rect x="0" y="16.9" width="63.2" height="18.5" fill="url(#mLake)"/>
<path d="M0 17 L12 17 L16 18.6 L10 21 L0 22 Z" fill="#32262a" opacity="0.6"/>
<path d="M12 20.6 L22 20 L34 19.4 L46 18.6 L63.2 18 V24 H12 Z" fill="#54463a" opacity="0.92"/>
<path d="M46 22 H63.2 V32.6 L58 31 L53 28.6 L49 25.6 Z" fill="#3a2c24" opacity="0.92"/>
<path d="M33.6 26.6 L37 26.2 L42 26.3 L47.4 26.6 L45.4 28.6 L41.4 29.8 L37.4 29.2 L34.8 28 Z" fill="#e0802e"/>
<path d="M36.4 26.8 L41 26.6 L44.4 27.2 L41.4 28.5 L38.2 28.3 Z" fill="#f2a450"/></g><path d="M3 24.8 L10 25.2 L20 25.6 L30 25.8 L40 25.6 L50 24.8 L58 23.8 L58 25.4 L50 26.6 L40 27.2 L32 27.6 L24 27.4 L14 27 L6 26.4 Z" fill="#20262c" opacity="0.8"/>
<ellipse cx="5.18" cy="24.06" rx="1.50" ry="1.72" fill="#a89884" transform="rotate(-11 5.2 24.06)"/>
<ellipse cx="4.90" cy="25.09" rx="1.35" ry="0.69" fill="#4e443c" opacity="0.75"/>
<ellipse cx="8.60" cy="23.91" rx="2.25" ry="1.83" fill="#cfc0aa" transform="rotate(-11 8.6 23.91)"/>
<ellipse cx="8.30" cy="25.01" rx="2.03" ry="0.73" fill="#4e443c" opacity="0.75"/>
<ellipse cx="12.26" cy="24.00" rx="1.30" ry="1.43" fill="#b4a48e" transform="rotate(12 12.6 24.00)"/>
<ellipse cx="12.30" cy="24.86" rx="1.17" ry="0.57" fill="#4e443c" opacity="0.75"/>
<ellipse cx="16.40" cy="23.35" rx="1.58" ry="1.31" fill="#d8cab4" transform="rotate(10 16.0 23.35)"/>
<ellipse cx="15.70" cy="24.14" rx="1.42" ry="0.52" fill="#4e443c" opacity="0.75"/>
<ellipse cx="19.26" cy="23.34" rx="2.35" ry="1.65" fill="#9e8e7c" transform="rotate(-0 19.4 23.34)"/>
<ellipse cx="19.10" cy="24.33" rx="2.12" ry="0.66" fill="#4e443c" opacity="0.75"/>
<ellipse cx="23.32" cy="23.74" rx="1.44" ry="1.96" fill="#e2d6c2" transform="rotate(13 23.6 23.74)"/>
<ellipse cx="23.30" cy="24.92" rx="1.30" ry="0.78" fill="#4e443c" opacity="0.75"/>
<ellipse cx="27.04" cy="23.84" rx="1.45" ry="1.94" fill="#cbbca6" transform="rotate(-6 27.0 23.84)"/>
<ellipse cx="26.70" cy="25.00" rx="1.30" ry="0.77" fill="#4e443c" opacity="0.75"/>
<ellipse cx="30.89" cy="23.34" rx="1.88" ry="1.27" fill="#e8ddca" transform="rotate(-11 30.6 23.34)"/>
<ellipse cx="30.30" cy="24.11" rx="1.69" ry="0.51" fill="#4e443c" opacity="0.75"/>
<ellipse cx="34.92" cy="24.46" rx="2.24" ry="1.29" fill="#bfae98" transform="rotate(10 34.6 24.46)"/>
<ellipse cx="34.30" cy="25.24" rx="2.01" ry="0.52" fill="#4e443c" opacity="0.75"/>
<ellipse cx="37.70" cy="24.18" rx="2.22" ry="1.62" fill="#d6c8b2" transform="rotate(-1 38.0 24.18)"/>
<ellipse cx="37.70" cy="25.15" rx="1.99" ry="0.65" fill="#4e443c" opacity="0.75"/>
<ellipse cx="42.11" cy="23.71" rx="2.29" ry="1.28" fill="#b0a08c" transform="rotate(-4 41.8 23.71)"/>
<ellipse cx="41.50" cy="24.48" rx="2.06" ry="0.51" fill="#4e443c" opacity="0.75"/>
<ellipse cx="46.20" cy="23.06" rx="1.74" ry="1.51" fill="#dcd0bc" transform="rotate(-5 45.8 23.06)"/>
<ellipse cx="45.50" cy="23.97" rx="1.56" ry="0.60" fill="#4e443c" opacity="0.75"/>
<ellipse cx="49.99" cy="23.46" rx="1.33" ry="1.18" fill="#c4b49e" transform="rotate(-0 49.6 23.46)"/>
<ellipse cx="49.30" cy="24.17" rx="1.20" ry="0.47" fill="#4e443c" opacity="0.75"/>
<ellipse cx="45.5" cy="20.6" rx="1.6" ry="0.9" fill="#b8a894"/>
<ellipse cx="49.5" cy="20.1" rx="2.2" ry="0.9" fill="#b8a894"/>
<ellipse cx="54" cy="20.3" rx="1.8" ry="0.9" fill="#b8a894"/>
<ellipse cx="58.5" cy="20.7" rx="2.1" ry="0.9" fill="#b8a894"/>
<ellipse cx="12.4" cy="29.2" rx="3.2" ry="1.8" fill="#8c7e72"/><ellipse cx="12.2" cy="28.7" rx="2.5" ry="1.1" fill="#c4b4a0"/></g></g></svg>
<div class="t lbl" style="left:15px;top:167.9px;">Vignette Mask</div>
<svg style="left:15px;top:207.8px;overflow:hidden" width="63.2" height="35.4" viewBox="0 0 63.2 35.4"><g filter="url(#mB)"><rect width="63.2" height="17.5" fill="url(#mSky)"/><path d="M10 11 L14.6 10.1 L18.7 9.1 L22.8 8.4 L25.9 9.1 L29 7 L33.2 5.7 L37.8 4.6 L42.5 5.6 L46.6 6.5 L49.5 7.6 L52 9 L54 17.5 H10 Z" fill="url(#mC)"/>
<path d="M15 11 L18.7 9.8 L22.6 9.4 L25.6 10 L28.6 9.4 L27 12 L24 11.6 L21 13 L17.4 12.4 Z" fill="#b5a59c" opacity="0.7"/>
<path d="M27.4 11 L31 8.6 L35 8.8 L33 11.6 L30 13.4 L28 13 Z" fill="#a4928a" opacity="0.55"/>
<path d="M36 10 L40 9.2 L44 10 L41 12.4 L37 13 Z" fill="#5c4c48" opacity="0.6"/>
<path d="M19 12 L23 10.6 L26 12.2 L24 14.4 L20 14.6 Z" fill="#5a4a48" opacity="0.55"/>
<path d="M30 9 L33 7 L36 7.8 L34 9.6 L31 10.6 Z" fill="#c0a89c" opacity="0.45"/>
<path d="M40 7.8 L44 7.4 L47 8.2 L44 10 L41 9.6 Z" fill="#a07860" opacity="0.6"/>
<path d="M32.4 6 L33.6 5.6 L37.8 4.6 L42.5 5.6 L46.6 6.5 L47.6 7.2 L45.6 7.4 L43 7 L40.6 7.7 L38.2 7 L35.6 7.5 L33.8 7 Z" fill="#e4832f"/>
<path d="M36.4 5.2 L37.8 4.8 L41 5.5 L39.6 6.2 L37.4 6.1 Z" fill="#f4a858"/>
<path d="M0 1.9 L4.2 3.9 L9.4 7.5 L13.5 10.1 L17.7 14.3 L20.3 16.8 L20.3 17.5 H0 Z" fill="url(#mL)"/>
<path d="M1.6 4.6 L5.6 7 L9.6 10.2 L6.6 11 L2.6 8.6 Z" fill="#6a5a56" opacity="0.5"/>
<path d="M63.2 0 L60 0.8 L55.9 3.4 L51.8 4.4 L48.6 6 L46.6 7 L43 9.6 L39.6 12 L36.4 14.2 L33.2 16.3 L31 17 L31 17.5 H63.2 Z" fill="url(#mR)"/>
<path d="M60 2.6 L56 5 L52 8 L55 9.2 L59 6.8 L63.2 4.8 V1.6 Z" fill="#90603e" opacity="0.45"/>
<path d="M0 15.9 L20 16.3 L34 16.4 L63.2 15.8 V17.6 H0 Z" fill="#2b2523"/><g><rect x="0" y="16.9" width="63.2" height="18.5" fill="url(#mLake)"/>
<path d="M0 17 L12 17 L16 18.6 L10 21 L0 22 Z" fill="#32262a" opacity="0.6"/>
<path d="M12 20.6 L22 20 L34 19.4 L46 18.6 L63.2 18 V24 H12 Z" fill="#54463a" opacity="0.92"/>
<path d="M46 22 H63.2 V32.6 L58 31 L53 28.6 L49 25.6 Z" fill="#3a2c24" opacity="0.92"/>
<path d="M33.6 26.6 L37 26.2 L42 26.3 L47.4 26.6 L45.4 28.6 L41.4 29.8 L37.4 29.2 L34.8 28 Z" fill="#e0802e"/>
<path d="M36.4 26.8 L41 26.6 L44.4 27.2 L41.4 28.5 L38.2 28.3 Z" fill="#f2a450"/></g><path d="M3 24.8 L10 25.2 L20 25.6 L30 25.8 L40 25.6 L50 24.8 L58 23.8 L58 25.4 L50 26.6 L40 27.2 L32 27.6 L24 27.4 L14 27 L6 26.4 Z" fill="#20262c" opacity="0.8"/>
<ellipse cx="5.18" cy="24.06" rx="1.50" ry="1.72" fill="#a89884" transform="rotate(-11 5.2 24.06)"/>
<ellipse cx="4.90" cy="25.09" rx="1.35" ry="0.69" fill="#4e443c" opacity="0.75"/>
<ellipse cx="8.60" cy="23.91" rx="2.25" ry="1.83" fill="#cfc0aa" transform="rotate(-11 8.6 23.91)"/>
<ellipse cx="8.30" cy="25.01" rx="2.03" ry="0.73" fill="#4e443c" opacity="0.75"/>
<ellipse cx="12.26" cy="24.00" rx="1.30" ry="1.43" fill="#b4a48e" transform="rotate(12 12.6 24.00)"/>
<ellipse cx="12.30" cy="24.86" rx="1.17" ry="0.57" fill="#4e443c" opacity="0.75"/>
<ellipse cx="16.40" cy="23.35" rx="1.58" ry="1.31" fill="#d8cab4" transform="rotate(10 16.0 23.35)"/>
<ellipse cx="15.70" cy="24.14" rx="1.42" ry="0.52" fill="#4e443c" opacity="0.75"/>
<ellipse cx="19.26" cy="23.34" rx="2.35" ry="1.65" fill="#9e8e7c" transform="rotate(-0 19.4 23.34)"/>
<ellipse cx="19.10" cy="24.33" rx="2.12" ry="0.66" fill="#4e443c" opacity="0.75"/>
<ellipse cx="23.32" cy="23.74" rx="1.44" ry="1.96" fill="#e2d6c2" transform="rotate(13 23.6 23.74)"/>
<ellipse cx="23.30" cy="24.92" rx="1.30" ry="0.78" fill="#4e443c" opacity="0.75"/>
<ellipse cx="27.04" cy="23.84" rx="1.45" ry="1.94" fill="#cbbca6" transform="rotate(-6 27.0 23.84)"/>
<ellipse cx="26.70" cy="25.00" rx="1.30" ry="0.77" fill="#4e443c" opacity="0.75"/>
<ellipse cx="30.89" cy="23.34" rx="1.88" ry="1.27" fill="#e8ddca" transform="rotate(-11 30.6 23.34)"/>
<ellipse cx="30.30" cy="24.11" rx="1.69" ry="0.51" fill="#4e443c" opacity="0.75"/>
<ellipse cx="34.92" cy="24.46" rx="2.24" ry="1.29" fill="#bfae98" transform="rotate(10 34.6 24.46)"/>
<ellipse cx="34.30" cy="25.24" rx="2.01" ry="0.52" fill="#4e443c" opacity="0.75"/>
<ellipse cx="37.70" cy="24.18" rx="2.22" ry="1.62" fill="#d6c8b2" transform="rotate(-1 38.0 24.18)"/>
<ellipse cx="37.70" cy="25.15" rx="1.99" ry="0.65" fill="#4e443c" opacity="0.75"/>
<ellipse cx="42.11" cy="23.71" rx="2.29" ry="1.28" fill="#b0a08c" transform="rotate(-4 41.8 23.71)"/>
<ellipse cx="41.50" cy="24.48" rx="2.06" ry="0.51" fill="#4e443c" opacity="0.75"/>
<ellipse cx="46.20" cy="23.06" rx="1.74" ry="1.51" fill="#dcd0bc" transform="rotate(-5 45.8 23.06)"/>
<ellipse cx="45.50" cy="23.97" rx="1.56" ry="0.60" fill="#4e443c" opacity="0.75"/>
<ellipse cx="49.99" cy="23.46" rx="1.33" ry="1.18" fill="#c4b49e" transform="rotate(-0 49.6 23.46)"/>
<ellipse cx="49.30" cy="24.17" rx="1.20" ry="0.47" fill="#4e443c" opacity="0.75"/>
<ellipse cx="45.5" cy="20.6" rx="1.6" ry="0.9" fill="#b8a894"/>
<ellipse cx="49.5" cy="20.1" rx="2.2" ry="0.9" fill="#b8a894"/>
<ellipse cx="54" cy="20.3" rx="1.8" ry="0.9" fill="#b8a894"/>
<ellipse cx="58.5" cy="20.7" rx="2.1" ry="0.9" fill="#b8a894"/>
<ellipse cx="12.4" cy="29.2" rx="3.2" ry="1.8" fill="#8c7e72"/><ellipse cx="12.2" cy="28.7" rx="2.5" ry="1.1" fill="#c4b4a0"/></g></svg>
<svg style="left:83.2px;top:207.8px;overflow:hidden" width="63.2" height="35.4" viewBox="0 0 63.2 35.4"><g filter="url(#mB)"><rect width="63.2" height="17.5" fill="url(#mSky)"/><path d="M10 11 L14.6 10.1 L18.7 9.1 L22.8 8.4 L25.9 9.1 L29 7 L33.2 5.7 L37.8 4.6 L42.5 5.6 L46.6 6.5 L49.5 7.6 L52 9 L54 17.5 H10 Z" fill="url(#mC)"/>
<path d="M15 11 L18.7 9.8 L22.6 9.4 L25.6 10 L28.6 9.4 L27 12 L24 11.6 L21 13 L17.4 12.4 Z" fill="#b5a59c" opacity="0.7"/>
<path d="M27.4 11 L31 8.6 L35 8.8 L33 11.6 L30 13.4 L28 13 Z" fill="#a4928a" opacity="0.55"/>
<path d="M36 10 L40 9.2 L44 10 L41 12.4 L37 13 Z" fill="#5c4c48" opacity="0.6"/>
<path d="M19 12 L23 10.6 L26 12.2 L24 14.4 L20 14.6 Z" fill="#5a4a48" opacity="0.55"/>
<path d="M30 9 L33 7 L36 7.8 L34 9.6 L31 10.6 Z" fill="#c0a89c" opacity="0.45"/>
<path d="M40 7.8 L44 7.4 L47 8.2 L44 10 L41 9.6 Z" fill="#a07860" opacity="0.6"/>
<path d="M32.4 6 L33.6 5.6 L37.8 4.6 L42.5 5.6 L46.6 6.5 L47.6 7.2 L45.6 7.4 L43 7 L40.6 7.7 L38.2 7 L35.6 7.5 L33.8 7 Z" fill="#e4832f"/>
<path d="M36.4 5.2 L37.8 4.8 L41 5.5 L39.6 6.2 L37.4 6.1 Z" fill="#f4a858"/>
<path d="M0 1.9 L4.2 3.9 L9.4 7.5 L13.5 10.1 L17.7 14.3 L20.3 16.8 L20.3 17.5 H0 Z" fill="url(#mL)"/>
<path d="M1.6 4.6 L5.6 7 L9.6 10.2 L6.6 11 L2.6 8.6 Z" fill="#6a5a56" opacity="0.5"/>
<path d="M63.2 0 L60 0.8 L55.9 3.4 L51.8 4.4 L48.6 6 L46.6 7 L43 9.6 L39.6 12 L36.4 14.2 L33.2 16.3 L31 17 L31 17.5 H63.2 Z" fill="url(#mR)"/>
<path d="M60 2.6 L56 5 L52 8 L55 9.2 L59 6.8 L63.2 4.8 V1.6 Z" fill="#90603e" opacity="0.45"/>
<path d="M0 15.9 L20 16.3 L34 16.4 L63.2 15.8 V17.6 H0 Z" fill="#2b2523"/><g><rect x="0" y="16.9" width="63.2" height="18.5" fill="url(#mLake)"/>
<path d="M0 17 L12 17 L16 18.6 L10 21 L0 22 Z" fill="#32262a" opacity="0.6"/>
<path d="M12 20.6 L22 20 L34 19.4 L46 18.6 L63.2 18 V24 H12 Z" fill="#54463a" opacity="0.92"/>
<path d="M46 22 H63.2 V32.6 L58 31 L53 28.6 L49 25.6 Z" fill="#3a2c24" opacity="0.92"/>
<path d="M33.6 26.6 L37 26.2 L42 26.3 L47.4 26.6 L45.4 28.6 L41.4 29.8 L37.4 29.2 L34.8 28 Z" fill="#e0802e"/>
<path d="M36.4 26.8 L41 26.6 L44.4 27.2 L41.4 28.5 L38.2 28.3 Z" fill="#f2a450"/></g><path d="M3 24.8 L10 25.2 L20 25.6 L30 25.8 L40 25.6 L50 24.8 L58 23.8 L58 25.4 L50 26.6 L40 27.2 L32 27.6 L24 27.4 L14 27 L6 26.4 Z" fill="#20262c" opacity="0.8"/>
<ellipse cx="5.18" cy="24.06" rx="1.50" ry="1.72" fill="#a89884" transform="rotate(-11 5.2 24.06)"/>
<ellipse cx="4.90" cy="25.09" rx="1.35" ry="0.69" fill="#4e443c" opacity="0.75"/>
<ellipse cx="8.60" cy="23.91" rx="2.25" ry="1.83" fill="#cfc0aa" transform="rotate(-11 8.6 23.91)"/>
<ellipse cx="8.30" cy="25.01" rx="2.03" ry="0.73" fill="#4e443c" opacity="0.75"/>
<ellipse cx="12.26" cy="24.00" rx="1.30" ry="1.43" fill="#b4a48e" transform="rotate(12 12.6 24.00)"/>
<ellipse cx="12.30" cy="24.86" rx="1.17" ry="0.57" fill="#4e443c" opacity="0.75"/>
<ellipse cx="16.40" cy="23.35" rx="1.58" ry="1.31" fill="#d8cab4" transform="rotate(10 16.0 23.35)"/>
<ellipse cx="15.70" cy="24.14" rx="1.42" ry="0.52" fill="#4e443c" opacity="0.75"/>
<ellipse cx="19.26" cy="23.34" rx="2.35" ry="1.65" fill="#9e8e7c" transform="rotate(-0 19.4 23.34)"/>
<ellipse cx="19.10" cy="24.33" rx="2.12" ry="0.66" fill="#4e443c" opacity="0.75"/>
<ellipse cx="23.32" cy="23.74" rx="1.44" ry="1.96" fill="#e2d6c2" transform="rotate(13 23.6 23.74)"/>
<ellipse cx="23.30" cy="24.92" rx="1.30" ry="0.78" fill="#4e443c" opacity="0.75"/>
<ellipse cx="27.04" cy="23.84" rx="1.45" ry="1.94" fill="#cbbca6" transform="rotate(-6 27.0 23.84)"/>
<ellipse cx="26.70" cy="25.00" rx="1.30" ry="0.77" fill="#4e443c" opacity="0.75"/>
<ellipse cx="30.89" cy="23.34" rx="1.88" ry="1.27" fill="#e8ddca" transform="rotate(-11 30.6 23.34)"/>
<ellipse cx="30.30" cy="24.11" rx="1.69" ry="0.51" fill="#4e443c" opacity="0.75"/>
<ellipse cx="34.92" cy="24.46" rx="2.24" ry="1.29" fill="#bfae98" transform="rotate(10 34.6 24.46)"/>
<ellipse cx="34.30" cy="25.24" rx="2.01" ry="0.52" fill="#4e443c" opacity="0.75"/>
<ellipse cx="37.70" cy="24.18" rx="2.22" ry="1.62" fill="#d6c8b2" transform="rotate(-1 38.0 24.18)"/>
<ellipse cx="37.70" cy="25.15" rx="1.99" ry="0.65" fill="#4e443c" opacity="0.75"/>
<ellipse cx="42.11" cy="23.71" rx="2.29" ry="1.28" fill="#b0a08c" transform="rotate(-4 41.8 23.71)"/>
<ellipse cx="41.50" cy="24.48" rx="2.06" ry="0.51" fill="#4e443c" opacity="0.75"/>
<ellipse cx="46.20" cy="23.06" rx="1.74" ry="1.51" fill="#dcd0bc" transform="rotate(-5 45.8 23.06)"/>
<ellipse cx="45.50" cy="23.97" rx="1.56" ry="0.60" fill="#4e443c" opacity="0.75"/>
<ellipse cx="49.99" cy="23.46" rx="1.33" ry="1.18" fill="#c4b49e" transform="rotate(-0 49.6 23.46)"/>
<ellipse cx="49.30" cy="24.17" rx="1.20" ry="0.47" fill="#4e443c" opacity="0.75"/>
<ellipse cx="45.5" cy="20.6" rx="1.6" ry="0.9" fill="#b8a894"/>
<ellipse cx="49.5" cy="20.1" rx="2.2" ry="0.9" fill="#b8a894"/>
<ellipse cx="54" cy="20.3" rx="1.8" ry="0.9" fill="#b8a894"/>
<ellipse cx="58.5" cy="20.7" rx="2.1" ry="0.9" fill="#b8a894"/>
<ellipse cx="12.4" cy="29.2" rx="3.2" ry="1.8" fill="#8c7e72"/><ellipse cx="12.2" cy="28.7" rx="2.5" ry="1.1" fill="#c4b4a0"/></g><defs><linearGradient id="dk" x1="0" y1="0" x2="1" y2="0"><stop offset="0" stop-color="#000" stop-opacity="0.85"/><stop offset="0.28" stop-color="#000" stop-opacity="0.55"/><stop offset="0.55" stop-color="#000" stop-opacity="0.1"/><stop offset="1" stop-color="#000" stop-opacity="0.3"/></linearGradient></defs><rect width="63.2" height="35.4" fill="url(#dk)"/></svg>
<svg style="left:152px;top:207.8px;overflow:hidden" width="63.2" height="35.4" viewBox="0 0 63.2 35.4"><defs><linearGradient id="gr" x1="0" y1="0" x2="1" y2="0"><stop offset="0" stop-color="#b0b0b0"/><stop offset="0.3" stop-color="#e6e6e6"/><stop offset="0.55" stop-color="#c4c4c4"/><stop offset="1" stop-color="#d2d2d2"/></linearGradient><filter id="sb" x="-50%" y="-50%" width="200%" height="200%"><feGaussianBlur stdDeviation="2.4"/></filter><clipPath id="cc"><circle cx="20.8" cy="18.3" r="15.3"/></clipPath></defs><rect width="63.2" height="35.4" fill="url(#gr)"/><path d="M37 7 L46 10 L60 18 L62 24 L50 21 L40 14 Z" fill="#0c0c0c" filter="url(#sb)"/><g clip-path="url(#cc)"><g filter="url(#mB)"><rect width="63.2" height="17.5" fill="url(#mSky)"/><path d="M10 11 L14.6 10.1 L18.7 9.1 L22.8 8.4 L25.9 9.1 L29 7 L33.2 5.7 L37.8 4.6 L42.5 5.6 L46.6 6.5 L49.5 7.6 L52 9 L54 17.5 H10 Z" fill="url(#mC)"/>
<path d="M15 11 L18.7 9.8 L22.6 9.4 L25.6 10 L28.6 9.4 L27 12 L24 11.6 L21 13 L17.4 12.4 Z" fill="#b5a59c" opacity="0.7"/>
<path d="M27.4 11 L31 8.6 L35 8.8 L33 11.6 L30 13.4 L28 13 Z" fill="#a4928a" opacity="0.55"/>
<path d="M36 10 L40 9.2 L44 10 L41 12.4 L37 13 Z" fill="#5c4c48" opacity="0.6"/>
<path d="M19 12 L23 10.6 L26 12.2 L24 14.4 L20 14.6 Z" fill="#5a4a48" opacity="0.55"/>
<path d="M30 9 L33 7 L36 7.8 L34 9.6 L31 10.6 Z" fill="#c0a89c" opacity="0.45"/>
<path d="M40 7.8 L44 7.4 L47 8.2 L44 10 L41 9.6 Z" fill="#a07860" opacity="0.6"/>
<path d="M32.4 6 L33.6 5.6 L37.8 4.6 L42.5 5.6 L46.6 6.5 L47.6 7.2 L45.6 7.4 L43 7 L40.6 7.7 L38.2 7 L35.6 7.5 L33.8 7 Z" fill="#e4832f"/>
<path d="M36.4 5.2 L37.8 4.8 L41 5.5 L39.6 6.2 L37.4 6.1 Z" fill="#f4a858"/>
<path d="M0 1.9 L4.2 3.9 L9.4 7.5 L13.5 10.1 L17.7 14.3 L20.3 16.8 L20.3 17.5 H0 Z" fill="url(#mL)"/>
<path d="M1.6 4.6 L5.6 7 L9.6 10.2 L6.6 11 L2.6 8.6 Z" fill="#6a5a56" opacity="0.5"/>
<path d="M63.2 0 L60 0.8 L55.9 3.4 L51.8 4.4 L48.6 6 L46.6 7 L43 9.6 L39.6 12 L36.4 14.2 L33.2 16.3 L31 17 L31 17.5 H63.2 Z" fill="url(#mR)"/>
<path d="M60 2.6 L56 5 L52 8 L55 9.2 L59 6.8 L63.2 4.8 V1.6 Z" fill="#90603e" opacity="0.45"/>
<path d="M0 15.9 L20 16.3 L34 16.4 L63.2 15.8 V17.6 H0 Z" fill="#2b2523"/><g><rect x="0" y="16.9" width="63.2" height="18.5" fill="url(#mLake)"/>
<path d="M0 17 L12 17 L16 18.6 L10 21 L0 22 Z" fill="#32262a" opacity="0.6"/>
<path d="M12 20.6 L22 20 L34 19.4 L46 18.6 L63.2 18 V24 H12 Z" fill="#54463a" opacity="0.92"/>
<path d="M46 22 H63.2 V32.6 L58 31 L53 28.6 L49 25.6 Z" fill="#3a2c24" opacity="0.92"/>
<path d="M33.6 26.6 L37 26.2 L42 26.3 L47.4 26.6 L45.4 28.6 L41.4 29.8 L37.4 29.2 L34.8 28 Z" fill="#e0802e"/>
<path d="M36.4 26.8 L41 26.6 L44.4 27.2 L41.4 28.5 L38.2 28.3 Z" fill="#f2a450"/></g><path d="M3 24.8 L10 25.2 L20 25.6 L30 25.8 L40 25.6 L50 24.8 L58 23.8 L58 25.4 L50 26.6 L40 27.2 L32 27.6 L24 27.4 L14 27 L6 26.4 Z" fill="#20262c" opacity="0.8"/>
<ellipse cx="5.18" cy="24.06" rx="1.50" ry="1.72" fill="#a89884" transform="rotate(-11 5.2 24.06)"/>
<ellipse cx="4.90" cy="25.09" rx="1.35" ry="0.69" fill="#4e443c" opacity="0.75"/>
<ellipse cx="8.60" cy="23.91" rx="2.25" ry="1.83" fill="#cfc0aa" transform="rotate(-11 8.6 23.91)"/>
<ellipse cx="8.30" cy="25.01" rx="2.03" ry="0.73" fill="#4e443c" opacity="0.75"/>
<ellipse cx="12.26" cy="24.00" rx="1.30" ry="1.43" fill="#b4a48e" transform="rotate(12 12.6 24.00)"/>
<ellipse cx="12.30" cy="24.86" rx="1.17" ry="0.57" fill="#4e443c" opacity="0.75"/>
<ellipse cx="16.40" cy="23.35" rx="1.58" ry="1.31" fill="#d8cab4" transform="rotate(10 16.0 23.35)"/>
<ellipse cx="15.70" cy="24.14" rx="1.42" ry="0.52" fill="#4e443c" opacity="0.75"/>
<ellipse cx="19.26" cy="23.34" rx="2.35" ry="1.65" fill="#9e8e7c" transform="rotate(-0 19.4 23.34)"/>
<ellipse cx="19.10" cy="24.33" rx="2.12" ry="0.66" fill="#4e443c" opacity="0.75"/>
<ellipse cx="23.32" cy="23.74" rx="1.44" ry="1.96" fill="#e2d6c2" transform="rotate(13 23.6 23.74)"/>
<ellipse cx="23.30" cy="24.92" rx="1.30" ry="0.78" fill="#4e443c" opacity="0.75"/>
<ellipse cx="27.04" cy="23.84" rx="1.45" ry="1.94" fill="#cbbca6" transform="rotate(-6 27.0 23.84)"/>
<ellipse cx="26.70" cy="25.00" rx="1.30" ry="0.77" fill="#4e443c" opacity="0.75"/>
<ellipse cx="30.89" cy="23.34" rx="1.88" ry="1.27" fill="#e8ddca" transform="rotate(-11 30.6 23.34)"/>
<ellipse cx="30.30" cy="24.11" rx="1.69" ry="0.51" fill="#4e443c" opacity="0.75"/>
<ellipse cx="34.92" cy="24.46" rx="2.24" ry="1.29" fill="#bfae98" transform="rotate(10 34.6 24.46)"/>
<ellipse cx="34.30" cy="25.24" rx="2.01" ry="0.52" fill="#4e443c" opacity="0.75"/>
<ellipse cx="37.70" cy="24.18" rx="2.22" ry="1.62" fill="#d6c8b2" transform="rotate(-1 38.0 24.18)"/>
<ellipse cx="37.70" cy="25.15" rx="1.99" ry="0.65" fill="#4e443c" opacity="0.75"/>
<ellipse cx="42.11" cy="23.71" rx="2.29" ry="1.28" fill="#b0a08c" transform="rotate(-4 41.8 23.71)"/>
<ellipse cx="41.50" cy="24.48" rx="2.06" ry="0.51" fill="#4e443c" opacity="0.75"/>
<ellipse cx="46.20" cy="23.06" rx="1.74" ry="1.51" fill="#dcd0bc" transform="rotate(-5 45.8 23.06)"/>
<ellipse cx="45.50" cy="23.97" rx="1.56" ry="0.60" fill="#4e443c" opacity="0.75"/>
<ellipse cx="49.99" cy="23.46" rx="1.33" ry="1.18" fill="#c4b49e" transform="rotate(-0 49.6 23.46)"/>
<ellipse cx="49.30" cy="24.17" rx="1.20" ry="0.47" fill="#4e443c" opacity="0.75"/>
<ellipse cx="45.5" cy="20.6" rx="1.6" ry="0.9" fill="#b8a894"/>
<ellipse cx="49.5" cy="20.1" rx="2.2" ry="0.9" fill="#b8a894"/>
<ellipse cx="54" cy="20.3" rx="1.8" ry="0.9" fill="#b8a894"/>
<ellipse cx="58.5" cy="20.7" rx="2.1" ry="0.9" fill="#b8a894"/>
<ellipse cx="12.4" cy="29.2" rx="3.2" ry="1.8" fill="#8c7e72"/><ellipse cx="12.2" cy="28.7" rx="2.5" ry="1.1" fill="#c4b4a0"/></g></g></svg>
<svg style="left:221px;top:207.8px;overflow:hidden" width="63.2" height="35.4" viewBox="0 0 63.2 35.4"><g filter="url(#mB)"><rect width="63.2" height="17.5" fill="url(#mSky)"/><path d="M10 11 L14.6 10.1 L18.7 9.1 L22.8 8.4 L25.9 9.1 L29 7 L33.2 5.7 L37.8 4.6 L42.5 5.6 L46.6 6.5 L49.5 7.6 L52 9 L54 17.5 H10 Z" fill="url(#mC)"/>
<path d="M15 11 L18.7 9.8 L22.6 9.4 L25.6 10 L28.6 9.4 L27 12 L24 11.6 L21 13 L17.4 12.4 Z" fill="#b5a59c" opacity="0.7"/>
<path d="M27.4 11 L31 8.6 L35 8.8 L33 11.6 L30 13.4 L28 13 Z" fill="#a4928a" opacity="0.55"/>
<path d="M36 10 L40 9.2 L44 10 L41 12.4 L37 13 Z" fill="#5c4c48" opacity="0.6"/>
<path d="M19 12 L23 10.6 L26 12.2 L24 14.4 L20 14.6 Z" fill="#5a4a48" opacity="0.55"/>
<path d="M30 9 L33 7 L36 7.8 L34 9.6 L31 10.6 Z" fill="#c0a89c" opacity="0.45"/>
<path d="M40 7.8 L44 7.4 L47 8.2 L44 10 L41 9.6 Z" fill="#a07860" opacity="0.6"/>
<path d="M32.4 6 L33.6 5.6 L37.8 4.6 L42.5 5.6 L46.6 6.5 L47.6 7.2 L45.6 7.4 L43 7 L40.6 7.7 L38.2 7 L35.6 7.5 L33.8 7 Z" fill="#e4832f"/>
<path d="M36.4 5.2 L37.8 4.8 L41 5.5 L39.6 6.2 L37.4 6.1 Z" fill="#f4a858"/>
<path d="M0 1.9 L4.2 3.9 L9.4 7.5 L13.5 10.1 L17.7 14.3 L20.3 16.8 L20.3 17.5 H0 Z" fill="url(#mL)"/>
<path d="M1.6 4.6 L5.6 7 L9.6 10.2 L6.6 11 L2.6 8.6 Z" fill="#6a5a56" opacity="0.5"/>
<path d="M63.2 0 L60 0.8 L55.9 3.4 L51.8 4.4 L48.6 6 L46.6 7 L43 9.6 L39.6 12 L36.4 14.2 L33.2 16.3 L31 17 L31 17.5 H63.2 Z" fill="url(#mR)"/>
<path d="M60 2.6 L56 5 L52 8 L55 9.2 L59 6.8 L63.2 4.8 V1.6 Z" fill="#90603e" opacity="0.45"/>
<path d="M0 15.9 L20 16.3 L34 16.4 L63.2 15.8 V17.6 H0 Z" fill="#2b2523"/><g><rect x="0" y="16.9" width="63.2" height="18.5" fill="url(#mLake)"/>
<path d="M0 17 L12 17 L16 18.6 L10 21 L0 22 Z" fill="#32262a" opacity="0.6"/>
<path d="M12 20.6 L22 20 L34 19.4 L46 18.6 L63.2 18 V24 H12 Z" fill="#54463a" opacity="0.92"/>
<path d="M46 22 H63.2 V32.6 L58 31 L53 28.6 L49 25.6 Z" fill="#3a2c24" opacity="0.92"/>
<path d="M33.6 26.6 L37 26.2 L42 26.3 L47.4 26.6 L45.4 28.6 L41.4 29.8 L37.4 29.2 L34.8 28 Z" fill="#e0802e"/>
<path d="M36.4 26.8 L41 26.6 L44.4 27.2 L41.4 28.5 L38.2 28.3 Z" fill="#f2a450"/></g><path d="M3 24.8 L10 25.2 L20 25.6 L30 25.8 L40 25.6 L50 24.8 L58 23.8 L58 25.4 L50 26.6 L40 27.2 L32 27.6 L24 27.4 L14 27 L6 26.4 Z" fill="#20262c" opacity="0.8"/>
<ellipse cx="5.18" cy="24.06" rx="1.50" ry="1.72" fill="#a89884" transform="rotate(-11 5.2 24.06)"/>
<ellipse cx="4.90" cy="25.09" rx="1.35" ry="0.69" fill="#4e443c" opacity="0.75"/>
<ellipse cx="8.60" cy="23.91" rx="2.25" ry="1.83" fill="#cfc0aa" transform="rotate(-11 8.6 23.91)"/>
<ellipse cx="8.30" cy="25.01" rx="2.03" ry="0.73" fill="#4e443c" opacity="0.75"/>
<ellipse cx="12.26" cy="24.00" rx="1.30" ry="1.43" fill="#b4a48e" transform="rotate(12 12.6 24.00)"/>
<ellipse cx="12.30" cy="24.86" rx="1.17" ry="0.57" fill="#4e443c" opacity="0.75"/>
<ellipse cx="16.40" cy="23.35" rx="1.58" ry="1.31" fill="#d8cab4" transform="rotate(10 16.0 23.35)"/>
<ellipse cx="15.70" cy="24.14" rx="1.42" ry="0.52" fill="#4e443c" opacity="0.75"/>
<ellipse cx="19.26" cy="23.34" rx="2.35" ry="1.65" fill="#9e8e7c" transform="rotate(-0 19.4 23.34)"/>
<ellipse cx="19.10" cy="24.33" rx="2.12" ry="0.66" fill="#4e443c" opacity="0.75"/>
<ellipse cx="23.32" cy="23.74" rx="1.44" ry="1.96" fill="#e2d6c2" transform="rotate(13 23.6 23.74)"/>
<ellipse cx="23.30" cy="24.92" rx="1.30" ry="0.78" fill="#4e443c" opacity="0.75"/>
<ellipse cx="27.04" cy="23.84" rx="1.45" ry="1.94" fill="#cbbca6" transform="rotate(-6 27.0 23.84)"/>
<ellipse cx="26.70" cy="25.00" rx="1.30" ry="0.77" fill="#4e443c" opacity="0.75"/>
<ellipse cx="30.89" cy="23.34" rx="1.88" ry="1.27" fill="#e8ddca" transform="rotate(-11 30.6 23.34)"/>
<ellipse cx="30.30" cy="24.11" rx="1.69" ry="0.51" fill="#4e443c" opacity="0.75"/>
<ellipse cx="34.92" cy="24.46" rx="2.24" ry="1.29" fill="#bfae98" transform="rotate(10 34.6 24.46)"/>
<ellipse cx="34.30" cy="25.24" rx="2.01" ry="0.52" fill="#4e443c" opacity="0.75"/>
<ellipse cx="37.70" cy="24.18" rx="2.22" ry="1.62" fill="#d6c8b2" transform="rotate(-1 38.0 24.18)"/>
<ellipse cx="37.70" cy="25.15" rx="1.99" ry="0.65" fill="#4e443c" opacity="0.75"/>
<ellipse cx="42.11" cy="23.71" rx="2.29" ry="1.28" fill="#b0a08c" transform="rotate(-4 41.8 23.71)"/>
<ellipse cx="41.50" cy="24.48" rx="2.06" ry="0.51" fill="#4e443c" opacity="0.75"/>
<ellipse cx="46.20" cy="23.06" rx="1.74" ry="1.51" fill="#dcd0bc" transform="rotate(-5 45.8 23.06)"/>
<ellipse cx="45.50" cy="23.97" rx="1.56" ry="0.60" fill="#4e443c" opacity="0.75"/>
<ellipse cx="49.99" cy="23.46" rx="1.33" ry="1.18" fill="#c4b49e" transform="rotate(-0 49.6 23.46)"/>
<ellipse cx="49.30" cy="24.17" rx="1.20" ry="0.47" fill="#4e443c" opacity="0.75"/>
<ellipse cx="45.5" cy="20.6" rx="1.6" ry="0.9" fill="#b8a894"/>
<ellipse cx="49.5" cy="20.1" rx="2.2" ry="0.9" fill="#b8a894"/>
<ellipse cx="54" cy="20.3" rx="1.8" ry="0.9" fill="#b8a894"/>
<ellipse cx="58.5" cy="20.7" rx="2.1" ry="0.9" fill="#b8a894"/>
<ellipse cx="12.4" cy="29.2" rx="3.2" ry="1.8" fill="#8c7e72"/><ellipse cx="12.2" cy="28.7" rx="2.5" ry="1.1" fill="#c4b4a0"/></g><rect width="63.2" height="35.4" fill="#000" opacity="0.12"/></svg><!--/PANEL--></div>
<div id="split" class="abs"></div>
<div id="gap1" class="abs"></div>
<div id="tlhead" class="abs"></div>
<div id="tl" class="abs"></div>
<div id="bottom" class="abs"></div>
<!--TOPBAR-->
<!-- status bar -->
<div class="t" style="left:12px;top:3.8px;font-size:5.75px;font-weight:bold;color:#e8e8ec;">9:41 AM</div>
<div class="t" style="left:39px;top:3.8px;font-size:5.75px;font-weight:bold;color:#e8e8ec;">Tue May 7</div>
<div class="t" style="left:615.2px;top:2.9px;font-size:6px;font-weight:bold;color:#e8e8ec;">100%</div>
<svg style="left:606.6px;top:3.1px" width="6.4" height="4.8" viewBox="0 0 8 6"><path d="M0.6 2.3 A5 5 0 0 1 7.4 2.3" fill="none" stroke="#f0f0f4" stroke-width="1.5"/><path d="M2 3.9 A3.1 3.1 0 0 1 6 3.9" fill="none" stroke="#f0f0f4" stroke-width="1.4"/><circle cx="4" cy="5.3" r="0.9" fill="#f0f0f4"/></svg>
<svg style="left:633.2px;top:3.3px" width="13" height="6" viewBox="0 0 13 6"><rect x="0.3" y="0.3" width="10.6" height="4.8" rx="1.5" fill="none" stroke="#9a9aa0" stroke-width="0.5"/><rect x="0.8" y="0.8" width="9.6" height="3.8" rx="1.1" fill="#f6f6f8"/><rect x="11.3" y="1.8" width="0.8" height="1.8" rx="0.4" fill="#9a9aa0"/></svg>
<!-- back + title -->
<svg style="left:14px;top:18.4px" width="8" height="11" viewBox="0 0 8 11"><path d="M6 1 L1.6 5.5 L6 10" fill="none" stroke="#d8d8dc" stroke-width="1.1" stroke-linecap="round" stroke-linejoin="round"/></svg>
<div class="t" style="left:34.3px;top:20.6px;font-size:8.2px;transform:scaleX(0.966);transform-origin:0 0;font-weight:bold;color:#f4f4f6;">Tech &amp; Gadgets</div>
<!-- centre icons -->
<svg style="left:272px;top:17px" width="12" height="13" viewBox="0 0 12 13"><path d="M3.8 4.2 H2.6 Q1.3 4.2 1.3 5.5 V10.3 Q1.3 11.6 2.6 11.6 H9.4 Q10.7 11.6 10.7 10.3 V5.5 Q10.7 4.2 9.4 4.2 H8.2" fill="none" stroke="#d4d4d8" stroke-width="0.9" stroke-linecap="round"/><path d="M6 1 V8.3 M3.9 6.4 L6 8.5 L8.1 6.4" fill="none" stroke="#d4d4d8" stroke-width="0.9" stroke-linecap="round" stroke-linejoin="round"/></svg>
<svg style="left:295px;top:18px" width="17" height="12" viewBox="0 0 17 12"><rect x="1" y="1" width="8.5" height="7" rx="1.8" fill="none" stroke="#d4d4d8" stroke-width="0.9"/><path d="M3.2 8 V8.6 Q3.2 10.6 5.2 10.6 H10 Q12 10.6 12 8.6 V5 Q12 3.2 10.2 3.1" fill="none" stroke="#d4d4d8" stroke-width="0.9"/><path d="M12.2 6 L15.6 3.6 V10 L12.2 7.8" fill="none" stroke="#d4d4d8" stroke-width="0.9" stroke-linejoin="round"/></svg>
<svg style="left:325px;top:17.5px" width="10" height="13" viewBox="0 0 10 13"><rect x="3.3" y="0.7" width="3.4" height="6.6" rx="1.7" fill="none" stroke="#d4d4d8" stroke-width="0.9"/><path d="M1.4 5.6 Q1.4 9.3 5 9.3 Q8.6 9.3 8.6 5.6 M5 9.3 V11.6 M3 11.6 H7" fill="none" stroke="#d4d4d8" stroke-width="0.9" stroke-linecap="round"/></svg>
<svg style="left:348px;top:17.5px" width="13" height="13" viewBox="0 0 13 13"><circle cx="6.5" cy="6.2" r="5.2" fill="none" stroke="#d4d4d8" stroke-width="0.9"/><path d="M4.2 9.2 L6.5 3 L8.8 9.2 L6.5 7.6 Z" fill="none" stroke="#d4d4d8" stroke-width="0.9" stroke-linejoin="round"/></svg>
<svg style="left:372px;top:15px" width="14" height="16" viewBox="0 0 14 16"><path d="M4 4.6 H3 Q1.6 4.6 1.6 6 V11.4 Q1.6 12.8 3 12.8 H8.4 Q9.8 12.8 9.8 11.4 V6 Q9.8 4.6 8.4 4.6 H7.4" fill="none" stroke="#d4d4d8" stroke-width="0.9" stroke-linecap="round"/><path d="M5.7 1.2 V8.2 M3.9 2.9 L5.7 1.1 L7.5 2.9" fill="none" stroke="#d4d4d8" stroke-width="0.9" stroke-linecap="round" stroke-linejoin="round"/><path d="M4.2 13 V13.4 Q4.2 14.8 5.6 14.8 H11 Q12.4 14.8 12.4 13.4 V8 Q12.4 6.6 11 6.6 H10" fill="none" stroke="#d4d4d8" stroke-width="0.9" stroke-linecap="round"/></svg>
<!-- right icons -->
<svg style="left:490.5px;top:17.6px" width="12" height="12" viewBox="0 0 12 12"><circle cx="6" cy="6.2" r="5.1" fill="none" stroke="#d4d4d8" stroke-width="0.9"/><path d="M4 5.2 H6.6 Q8.2 5.2 8.2 6.8 Q8.2 8.6 6.2 8.6 M5.2 3.8 L3.8 5.2 L5.2 6.6" fill="none" stroke="#d4d4d8" stroke-width="0.8" stroke-linecap="round" stroke-linejoin="round"/></svg>
<svg style="left:514.6px;top:17.6px" width="12" height="12" viewBox="0 0 12 12"><circle cx="6" cy="6.2" r="5.1" fill="none" stroke="#d4d4d8" stroke-width="0.9"/><path d="M8 5.2 H5.4 Q3.8 5.2 3.8 6.8 Q3.8 8.6 5.8 8.6 M6.8 3.8 L8.2 5.2 L6.8 6.6" fill="none" stroke="#d4d4d8" stroke-width="0.8" stroke-linecap="round" stroke-linejoin="round"/></svg>
<svg style="left:538px;top:18.5px" width="15" height="11" viewBox="0 0 15 11"><rect x="1" y="1" width="12.6" height="8.4" rx="1.4" fill="none" stroke="#d4d4d8" stroke-width="0.9"/><rect x="2.4" y="2.2" width="7" height="1.6" fill="#d4d4d8"/><path d="M2 4.6 H12.6" stroke="#d4d4d8" stroke-width="0.5"/></svg>
<div class="abs" style="left:560px;top:16px;width:22px;height:15px;background:#2a292e;border-radius:2.5px 0 0 2.5px;"></div>
<div class="abs" style="left:582px;top:16px;width:21px;height:15px;background:#5d59e8;border-radius:0 2.5px 2.5px 0;"></div>
<div class="abs" style="left:607px;top:16px;width:21px;height:15px;background:#222126;border-radius:2.5px;"></div>
<svg style="left:564px;top:18.5px" width="14" height="11" viewBox="0 0 14 11"><rect x="1" y="0.9" width="11.8" height="8.6" rx="1.3" fill="none" stroke="#fff" stroke-width="1"/><path d="M1.4 9 L5 4.8 L7.2 7.2 L9 5.8 L12.4 9 Z" fill="#fff"/><circle cx="9.6" cy="3.3" r="1" fill="#fff"/></svg>
<svg style="left:586px;top:17.5px" width="14" height="13" viewBox="0 0 14 13"><circle cx="5.2" cy="5" r="3.9" fill="none" stroke="#fff" stroke-width="0.9"/><rect x="4.6" y="4.2" width="7.8" height="7.6" rx="1.5" fill="#5d59e8" stroke="#fff" stroke-width="0.9"/><path d="M8.5 6.1 L9.1 7.5 L10.6 7.6 L9.4 8.5 L9.8 10 L8.5 9.2 L7.2 10 L7.6 8.5 L6.4 7.6 L7.9 7.5 Z" fill="#fff"/></svg>
<svg style="left:611px;top:17.5px" width="13" height="13" viewBox="0 0 13 13"><circle cx="6.5" cy="6.3" r="4.7" fill="none" stroke="#b8b8be" stroke-width="0.8" stroke-dasharray="2.2 1.2"/><rect x="5.1" y="3.6" width="2.8" height="4.4" rx="1.2" fill="#e4e4e8"/><path d="M6.5 8 V9.4" stroke="#e4e4e8" stroke-width="0.8"/></svg>
<svg style="left:636px;top:17.5px" width="13" height="13" viewBox="0 0 13 13"><circle cx="6.2" cy="6.2" r="5.2" fill="none" stroke="#d4d4d8" stroke-width="0.9"/><circle cx="3.7" cy="6.2" r="0.75" fill="#d4d4d8"/><circle cx="6.2" cy="6.2" r="0.75" fill="#d4d4d8"/><circle cx="8.7" cy="6.2" r="0.75" fill="#d4d4d8"/></svg>
<!--/TOPBAR-->
<!--CTRL-->
<!-- viewer controls -->
<svg style="left:14.5px;top:249.1px" width="8" height="7" viewBox="0 0 8 7"><path d="M1 0.6 V6.4" stroke="#8b8a90" stroke-width="0.8" stroke-linecap="round"/><path d="M6.6 0.8 L2.6 3.5 L6.6 6.2 Z" fill="none" stroke="#8b8a90" stroke-width="0.8" stroke-linejoin="round"/></svg>
<svg style="left:34.9px;top:246.7px" width="11" height="12" viewBox="0 0 11 12"><path d="M1.2 0.9 Q1.2 0.2 1.9 0.6 L9.6 5.2 Q10.2 5.8 9.6 6.3 L1.9 11 Q1.2 11.4 1.2 10.7 Z" fill="#fff"/></svg>
<svg style="left:58.3px;top:249.1px" width="8" height="7" viewBox="0 0 8 7"><path d="M7 0.6 V6.4" stroke="#8b8a90" stroke-width="0.8" stroke-linecap="round"/><path d="M1.4 0.8 L5.4 3.5 L1.4 6.2 Z" fill="none" stroke="#8b8a90" stroke-width="0.8" stroke-linejoin="round"/></svg>
<div class="abs" style="left:153.2px;top:245.4px;width:53.6px;height:14.3px;background:#09080a;border-radius:2.5px;"></div>
<div class="t" id="tcode" style="left:159.2px;top:249.5px;font-size:7.6px;color:#7a797f;">00:<span style="color:#fff;font-weight:bold;">00:08</span>:19</div>
<div class="abs" style="left:300.4px;top:245.4px;width:27.3px;height:14.3px;background:#222126;border-radius:2.5px;"></div>
<div class="t" style="left:305px;top:249.6px;font-size:7.3px;color:#f0f0f2;">38</div>
<div class="t" style="left:319px;top:250.3px;font-size:6.8px;color:#5e5d63;">%</div>
<svg style="left:334.5px;top:246.9px" width="16" height="12" viewBox="0 0 16 12"><rect x="1" y="1" width="12.4" height="8.6" rx="1.6" fill="none" stroke="#e6e6ea" stroke-width="1"/><circle cx="12.8" cy="8.8" r="3.1" fill="#141318"/><circle cx="12.8" cy="8.8" r="2.4" fill="#e6e6ea"/><path d="M11.6 8.8 H14" stroke="#77767c" stroke-width="0.6"/></svg>
<!--/CTRL-->
<!--TLHEAD-->
<!-- timeline header -->
<div class="t" style="left:7.7px;top:272.6px;font-size:5.55px;color:#8e8d93;">Select</div>
<svg style="left:8px;top:280.8px" width="7" height="7" viewBox="0 0 7 7"><rect x="0.7" y="0.7" width="5.6" height="5.6" rx="1.4" fill="#16151c" stroke="#f2c40f" stroke-width="1.25"/></svg>
<div class="t" style="left:17.8px;top:281.7px;font-size:6.6px;transform:scaleX(0.9);transform-origin:0 0;font-weight:bold;color:#f2f2f4;">Clip</div>
<svg style="left:31.3px;top:281px" width="5" height="7" viewBox="0 0 5 7"><path d="M1.2 2.6 L2.5 1.3 L3.8 2.6 M1.2 4.4 L2.5 5.7 L3.8 4.4" fill="none" stroke="#8e8d93" stroke-width="0.7" stroke-linecap="round" stroke-linejoin="round"/></svg>
<div class="abs" style="left:322px;top:269.5px;width:14.2px;height:0.8px;background:#3a393e;"></div>
<div class="abs" style="left:322px;top:271.9px;width:14.2px;height:0.8px;background:#3a393e;"></div>
<div class="t" style="left:270.9px;top:276.9px;font-size:7.65px;transform:scaleX(0.94);transform-origin:0 0;font-weight:bold;color:#f4f4f6;">Channel Introduction</div>
<div class="t" style="left:349.6px;top:277px;font-size:7.4px;letter-spacing:0.15px;color:#9b9aa0;">00:30</div>
<svg style="left:375px;top:274px" width="12" height="12" viewBox="0 0 12 12"><circle cx="6" cy="6" r="5" fill="none" stroke="#d4d4d8" stroke-width="0.9"/><circle cx="6" cy="3.6" r="0.7" fill="#d4d4d8"/><path d="M5.2 5.2 H6.2 V8.4 M5 8.5 H7.3" fill="none" stroke="#d4d4d8" stroke-width="0.8" stroke-linecap="round"/></svg>
<svg style="left:553px;top:273px" width="17" height="14" viewBox="0 0 17 14"><rect x="0.9" y="4.3" width="5.9" height="5.4" rx="2" fill="none" stroke="#c8c8cc" stroke-width="0.9"/><rect x="10.2" y="4.3" width="5.9" height="5.4" rx="2" fill="none" stroke="#c8c8cc" stroke-width="0.9"/><path d="M8.5 0.8 V2.4 M8.5 11.6 V13.2 M8.5 4.4 V5.6 M8.5 8.4 V9.6" stroke="#c8c8cc" stroke-width="0.8" stroke-linecap="round"/><path d="M6.8 7 H10.2" stroke="#c8c8cc" stroke-width="0.7"/></svg>
<svg style="left:579.3px;top:273.8px" width="15" height="12" viewBox="0 0 15 12"><path d="M2.8 8.4 H2.4 Q1 8.4 1 7 V2.4 Q1 1 2.4 1 H9.6 Q11 1 11 2.4 V2.6" fill="none" stroke="#c8c8cc" stroke-width="0.9"/><rect x="3.4" y="3.2" width="10.6" height="8" rx="1.5" fill="none" stroke="#c8c8cc" stroke-width="0.9"/><rect x="5.8" y="6.4" width="1.5" height="2" fill="#c8c8cc"/><rect x="10" y="6.4" width="1.5" height="2" fill="#c8c8cc"/></svg>
<div class="t" style="left:604.5px;top:277px;font-size:7.45px;transform:scaleX(0.962);transform-origin:0 0;font-weight:bold;color:#f4f4f6;">Options</div>
<svg style="left:635.5px;top:277.5px" width="7" height="5" viewBox="0 0 7 5"><path d="M1 1.2 L3.5 3.8 L6 1.2" fill="none" stroke="#c8c8cc" stroke-width="0.8" stroke-linecap="round" stroke-linejoin="round"/></svg>
<!--/TLHEAD-->
<!--TIMELINE-->
<div class="tick" style="left:8.5px;top:295.7px;height:9.6px;"></div>
<div class="t tc" style="left:11.0px;top:300.3px;">00:00:00</div>
<div class="tick" style="left:39.2px;top:296.4px;height:1.4px;background:#4a494f;"></div>
<div class="tick" style="left:69.8px;top:296.4px;height:1.4px;background:#4a494f;"></div>
<div class="tick" style="left:100.5px;top:296.4px;height:1.4px;background:#4a494f;"></div>
<div class="tick" style="left:131.1px;top:296.4px;height:1.4px;background:#4a494f;"></div>
<div class="tick" style="left:161.8px;top:295.7px;height:9.6px;"></div>
<div class="t tc" style="left:164.3px;top:300.3px;">00:00:05</div>
<div class="tick" style="left:192.5px;top:296.4px;height:1.4px;background:#4a494f;"></div>
<div class="tick" style="left:223.1px;top:296.4px;height:1.4px;background:#4a494f;"></div>
<div class="tick" style="left:253.8px;top:296.4px;height:1.4px;background:#4a494f;"></div>
<div class="tick" style="left:284.4px;top:296.4px;height:1.4px;background:#4a494f;"></div>
<div class="tick" style="left:315.1px;top:295.7px;height:9.6px;"></div>
<div class="t tc" style="left:317.6px;top:300.3px;">00:00:10</div>
<div class="tick" style="left:345.8px;top:296.4px;height:1.4px;background:#4a494f;"></div>
<div class="tick" style="left:376.4px;top:296.4px;height:1.4px;background:#4a494f;"></div>
<div class="tick" style="left:407.1px;top:296.4px;height:1.4px;background:#4a494f;"></div>
<div class="tick" style="left:437.7px;top:296.4px;height:1.4px;background:#4a494f;"></div>
<div class="tick" style="left:468.4px;top:295.7px;height:9.6px;"></div>
<div class="t tc" style="left:470.9px;top:300.3px;">00:00:15</div>
<div class="tick" style="left:499.1px;top:296.4px;height:1.4px;background:#4a494f;"></div>
<div class="tick" style="left:529.7px;top:296.4px;height:1.4px;background:#4a494f;"></div>
<div class="tick" style="left:560.4px;top:296.4px;height:1.4px;background:#4a494f;"></div>
<div class="tick" style="left:591.0px;top:296.4px;height:1.4px;background:#4a494f;"></div>
<div class="tick" style="left:621.7px;top:295.7px;height:9.6px;"></div>
<div class="t tc" style="left:624.2px;top:300.3px;width:15.1px;overflow:hidden;">00:00</div>
<div class="abs" style="left:7.6px;top:385.2px;width:634px;height:41px;background:#000;border-radius:2px;"></div>
<div class="abs" style="left:10px;top:329px;width:630px;height:36.6px;background:#2b4a97;border-radius:1.4px;overflow:hidden;"><div class="abs" style="left:0;top:17.8px;width:100%;height:3px;background:#1c3884;"></div><div class="abs" style="left:0;top:20.7px;width:100%;height:2.2px;background:#4367b4;"></div><div class="abs" style="left:0;top:22.9px;width:100%;height:14px;background:#14327c;"></div><svg style="left:0;top:0" width="630" height="36.6" viewBox="0 0 630 36.6"><path d="M0 36.8 L0.0 31.6 L1.3 31.1 L2.6 32.1 L3.9 31.4 L5.2 31.6 L6.5 30.5 L7.8 31.2 L9.1 31.4 L10.4 30.5 L11.7 32.1 L13.0 32.1 L14.3 31.8 L15.6 31.8 L16.9 32.3 L18.2 31.3 L19.5 32.6 L20.8 32.2 L22.1 32.1 L23.4 33.1 L24.7 32.3 L26.0 31.3 L27.3 31.1 L28.6 31.8 L29.9 30.8 L31.2 31.2 L32.5 30.9 L33.8 31.7 L35.1 31.3 L36.4 31.4 L37.7 31.5 L39.0 31.8 L40.3 30.9 L41.6 31.0 L42.9 31.9 L44.2 31.8 L45.5 30.1 L46.8 32.4 L48.1 32.0 L49.4 32.2 L50.7 32.4 L52.0 31.9 L53.3 32.3 L54.6 32.5 L55.9 32.3 L57.2 32.0 L58.5 32.5 L59.8 31.6 L61.1 31.6 L62.4 31.6 L63.7 32.1 L65.0 31.6 L66.3 32.5 L67.6 31.8 L68.9 32.0 L70.2 31.7 L71.5 31.8 L72.8 31.8 L74.1 31.8 L75.4 32.4 L76.7 32.1 L78.0 32.4 L79.3 32.5 L80.6 32.9 L81.9 33.2 L83.2 33.2 L84.5 33.2 L85.8 33.2 L87.1 33.2 L88.4 33.2 L89.7 32.7 L91.0 32.5 L92.3 33.0 L93.6 32.4 L94.9 31.0 L96.2 32.1 L97.5 31.6 L98.8 31.7 L100.1 32.5 L101.4 31.6 L102.7 33.1 L104.0 32.6 L105.3 32.6 L106.6 32.5 L107.9 32.6 L109.2 32.0 L110.5 32.8 L111.8 32.7 L113.1 32.6 L114.4 33.0 L115.7 32.8 L117.0 33.0 L118.3 31.9 L119.6 32.6 L120.9 32.4 L122.2 31.9 L123.5 32.3 L124.8 31.7 L126.1 31.6 L127.4 32.1 L128.7 31.7 L130.0 31.8 L131.3 31.1 L132.6 31.1 L133.9 30.9 L135.2 31.0 L136.5 29.6 L137.8 31.6 L139.1 31.2 L140.4 31.6 L141.7 32.2 L143.0 32.3 L144.3 32.4 L145.6 31.7 L146.9 30.1 L148.2 31.8 L149.5 32.3 L150.8 32.2 L152.1 32.2 L153.4 32.1 L154.7 32.1 L156.0 31.1 L157.3 31.6 L158.6 30.9 L159.9 31.1 L161.2 31.3 L162.5 31.1 L163.8 31.6 L165.1 31.7 L166.4 31.2 L167.7 31.3 L169.0 32.1 L170.3 32.0 L171.6 32.9 L172.9 30.8 L174.2 31.9 L175.5 31.7 L176.8 32.7 L178.1 32.7 L179.4 32.6 L180.7 32.1 L182.0 32.5 L183.3 32.3 L184.6 33.2 L185.9 31.0 L187.2 30.7 L188.5 32.1 L189.8 32.6 L191.1 32.2 L192.4 32.4 L193.7 32.4 L195.0 30.3 L196.3 31.6 L197.6 32.1 L198.9 32.0 L200.2 32.0 L201.5 32.9 L202.8 32.6 L204.1 32.8 L205.4 32.5 L206.7 33.1 L208.0 32.7 L209.3 31.9 L210.6 33.2 L211.9 32.9 L213.2 33.2 L214.5 31.3 L215.8 31.8 L217.1 32.0 L218.4 32.9 L219.7 32.4 L221.0 32.7 L222.3 32.1 L223.6 32.6 L224.9 31.9 L226.2 31.7 L227.5 32.0 L228.8 32.3 L230.1 31.6 L231.4 32.4 L232.7 32.5 L234.0 30.9 L235.3 32.5 L236.6 32.7 L237.9 32.0 L239.2 32.1 L240.5 32.4 L241.8 31.9 L243.1 32.6 L244.4 31.7 L245.7 32.0 L247.0 32.6 L248.3 32.5 L249.6 31.5 L250.9 32.1 L252.2 30.5 L253.5 31.3 L254.8 31.8 L256.1 30.8 L257.4 31.5 L258.7 31.3 L260.0 30.7 L261.3 31.1 L262.6 30.4 L263.9 31.2 L265.2 31.5 L266.5 31.8 L267.8 31.3 L269.1 32.0 L270.4 31.4 L271.7 32.3 L273.0 32.4 L274.3 31.7 L275.6 31.7 L276.9 31.6 L278.2 30.8 L279.5 32.2 L280.8 32.4 L282.1 31.8 L283.4 31.2 L284.7 31.4 L286.0 31.2 L287.3 31.3 L288.6 31.9 L289.9 31.4 L291.2 31.7 L292.5 31.3 L293.8 31.4 L295.1 31.5 L296.4 31.7 L297.7 31.5 L299.0 32.8 L300.3 32.3 L301.6 31.9 L302.9 32.5 L304.2 32.5 L305.5 32.2 L306.8 32.9 L308.1 33.1 L309.4 31.6 L310.7 32.2 L312.0 32.7 L313.3 32.8 L314.6 32.8 L315.9 32.8 L317.2 32.7 L318.5 32.1 L319.8 32.7 L321.1 31.7 L322.4 32.0 L323.7 31.9 L325.0 32.6 L326.3 32.7 L327.6 32.7 L328.9 32.0 L330.2 32.0 L331.5 32.0 L332.8 33.1 L334.1 32.8 L335.4 33.2 L336.7 33.0 L338.0 33.0 L339.3 32.4 L340.6 32.6 L341.9 33.2 L343.2 32.4 L344.5 32.8 L345.8 32.2 L347.1 32.5 L348.4 32.7 L349.7 31.9 L351.0 32.4 L352.3 31.8 L353.6 32.2 L354.9 32.3 L356.2 32.2 L357.5 31.8 L358.8 32.0 L360.1 31.8 L361.4 31.3 L362.7 32.4 L364.0 32.0 L365.3 32.7 L366.6 32.6 L367.9 31.7 L369.2 32.3 L370.5 31.7 L371.8 32.2 L373.1 32.4 L374.4 32.0 L375.7 32.3 L377.0 32.3 L378.3 32.1 L379.6 31.2 L380.9 31.9 L382.2 29.9 L383.5 31.5 L384.8 30.9 L386.1 30.6 L387.4 31.6 L388.7 31.3 L390.0 30.7 L391.3 31.5 L392.6 31.8 L393.9 32.0 L395.2 31.6 L396.5 33.0 L397.8 32.7 L399.1 32.1 L400.4 31.5 L401.7 31.8 L403.0 31.6 L404.3 31.6 L405.6 31.9 L406.9 31.6 L408.2 31.7 L409.5 32.0 L410.8 31.1 L412.1 32.2 L413.4 32.0 L414.7 32.0 L416.0 31.8 L417.3 31.9 L418.6 31.2 L419.9 32.2 L421.2 30.7 L422.5 30.0 L423.8 31.7 L425.1 32.4 L426.4 32.7 L427.7 32.8 L429.0 32.0 L430.3 32.4 L431.6 32.4 L432.9 33.2 L434.2 32.4 L435.5 33.2 L436.8 33.2 L438.1 33.2 L439.4 32.6 L440.7 32.7 L442.0 32.6 L443.3 32.8 L444.6 32.0 L445.9 32.5 L447.2 32.5 L448.5 32.4 L449.8 32.0 L451.1 32.6 L452.4 32.6 L453.7 30.3 L455.0 32.1 L456.3 32.4 L457.6 32.8 L458.9 30.9 L460.2 32.0 L461.5 32.6 L462.8 31.6 L464.1 33.1 L465.4 32.2 L466.7 32.4 L468.0 33.1 L469.3 32.7 L470.6 32.0 L471.9 32.4 L473.2 32.2 L474.5 31.9 L475.8 32.6 L477.1 32.0 L478.4 31.8 L479.7 32.0 L481.0 31.5 L482.3 31.3 L483.6 30.9 L484.9 31.9 L486.2 31.1 L487.5 31.9 L488.8 30.2 L490.1 31.3 L491.4 31.5 L492.7 31.3 L494.0 31.4 L495.3 32.0 L496.6 31.8 L497.9 32.5 L499.2 31.6 L500.5 31.6 L501.8 31.7 L503.1 31.7 L504.4 30.2 L505.7 30.0 L507.0 32.0 L508.3 31.1 L509.6 31.2 L510.9 32.4 L512.2 31.1 L513.5 31.2 L514.8 30.9 L516.1 30.9 L517.4 31.7 L518.7 30.9 L520.0 31.8 L521.3 31.2 L522.6 32.1 L523.9 31.6 L525.2 31.6 L526.5 32.5 L527.8 31.3 L529.1 32.3 L530.4 32.8 L531.7 32.1 L533.0 31.8 L534.3 32.6 L535.6 31.1 L536.9 32.0 L538.2 31.9 L539.5 31.8 L540.8 31.9 L542.1 32.1 L543.4 32.2 L544.7 32.2 L546.0 32.0 L547.3 32.1 L548.6 32.5 L549.9 31.1 L551.2 31.7 L552.5 33.2 L553.8 32.8 L555.1 32.4 L556.4 32.1 L557.7 33.0 L559.0 32.4 L560.3 32.5 L561.6 33.2 L562.9 33.2 L564.2 33.1 L565.5 33.1 L566.8 32.9 L568.1 32.4 L569.4 32.7 L570.7 33.0 L572.0 33.0 L573.3 32.6 L574.6 31.8 L575.9 32.4 L577.2 32.3 L578.5 32.1 L579.8 32.2 L581.1 30.6 L582.4 32.3 L583.7 32.3 L585.0 32.1 L586.3 32.1 L587.6 32.7 L588.9 32.6 L590.2 32.3 L591.5 31.3 L592.8 31.2 L594.1 33.2 L595.4 32.5 L596.7 32.2 L598.0 32.0 L599.3 32.6 L600.6 32.0 L601.9 32.2 L603.2 31.4 L604.5 31.2 L605.8 31.4 L607.1 31.9 L608.4 31.6 L609.7 31.4 L611.0 29.9 L612.3 31.6 L613.6 31.3 L614.9 31.5 L616.2 31.7 L617.5 31.4 L618.8 32.0 L620.1 31.3 L621.4 32.2 L622.7 31.2 L624.0 32.3 L625.3 31.6 L626.6 31.6 L627.9 31.2 L629.2 30.8 L630 36.8 Z" fill="#7099e1"/></svg></div>
<div class="abs" style="left:11px;top:330.3px;width:34.8px;height:15.5px;border-radius:2.2px;overflow:hidden;background:#d4d3d6;"><svg style="left:0;top:0" width="34.8" height="15.5" viewBox="0 0 34.8 15.5"><defs><linearGradient id="tg1" x1="0" y1="0" x2="1" y2="0"><stop offset="0" stop-color="#c9c8cb"/><stop offset="0.25" stop-color="#e6e5e8"/><stop offset="0.7" stop-color="#e2e1e4"/><stop offset="1" stop-color="#b4b2b4"/></linearGradient><filter id="tb"><feGaussianBlur stdDeviation="0.25"/></filter></defs><rect width="34.8" height="15.5" fill="url(#tg1)"/><g filter="url(#tb)"><path d="M11.7 12.4 H16 L15.8 15.5 H14.4 L13.8 13.4 L13.2 15.5 H11.9 Z" fill="#a8916a"/><path d="M11.4 5.8 Q13.3 4.9 15.4 5.8 Q17 6.6 16.9 9 L16.4 12.7 H11.3 L10.2 9.4 Q9.8 6.8 11.4 5.8 Z" fill="#3a2f32"/><ellipse cx="13.3" cy="3.9" rx="1.05" ry="1.35" fill="#6a4434"/><path d="M12.2 3.4 Q12.2 2.3 13.3 2.3 Q14.4 2.3 14.4 3.4 Q13.3 2.9 12.2 3.4 Z" fill="#17100f"/></g></svg></div>
<svg style="left:48px;top:332px" width="9" height="7" viewBox="0 0 9 7"><rect x="0.5" y="0.5" width="6" height="5.6" rx="1" fill="none" stroke="#7e93c8" stroke-width="0.6"/><path d="M6.7 2.4 L8.4 1.4 V5.2 L6.7 4.2" fill="none" stroke="#7e93c8" stroke-width="0.6"/></svg>
<div class="t lbl" style="left:58.9px;top:333px;">Welcome to Tech &amp; Gadgets</div>
<div class="abs" style="left:10px;top:367.1px;width:630px;height:16.4px;background:#4b2b89;border-radius:1.4px;"></div>
<svg style="left:12.8px;top:370px" width="9" height="7" viewBox="0 0 9 7"><rect x="0.4" y="0.4" width="8.2" height="6" rx="0.8" fill="none" stroke="#8d78bf" stroke-width="0.6"/><text x="4.5" y="5.2" font-family="Liberation Sans, sans-serif" font-size="4.6" fill="#9d8bc8" text-anchor="middle">A</text></svg>
<div class="t lbl" style="left:26.8px;top:370.7px;">Tech &amp; Gadgets</div>
<div class="abs" style="left:9.3px;top:385px;width:1.6px;height:1.4px;background:#4a76d8;border-radius:1px;"></div>
<div class="abs" style="left:10px;top:387.6px;width:630px;height:36.1px;background:#2b4a97;border-radius:1.4px;"></div>
<div class="abs" style="left:11.2px;top:389px;width:34px;height:15.8px;border-radius:2.3px;overflow:hidden;background:#b79a8a;"><div class="abs" style="left:0.00px;top:0.00px;width:34.09px;height:15.91px;background:#c9a0c4;"></div><div class="abs" style="left:0.00px;top:0.00px;width:3.66px;height:2.23px;background:#b08ad0;"></div><div class="abs" style="left:3.56px;top:0.00px;width:6.42px;height:2.23px;background:#2a1a9a;"></div><div class="abs" style="left:9.88px;top:0.00px;width:6.82px;height:2.23px;background:#8a60d0;"></div><div class="abs" style="left:16.60px;top:0.00px;width:7.21px;height:2.23px;background:#a274c8;"></div><div class="abs" style="left:23.72px;top:0.00px;width:10.38px;height:2.23px;background:#b890c4;"></div><div class="abs" style="left:0.00px;top:2.13px;width:3.66px;height:3.26px;background:#d8a8a8;"></div><div class="abs" style="left:3.56px;top:2.13px;width:6.42px;height:3.26px;background:#5a48d8;"></div><div class="abs" style="left:9.88px;top:2.13px;width:6.82px;height:3.66px;background:#c49ccc;"></div><div class="abs" style="left:16.60px;top:2.13px;width:7.21px;height:8.01px;background:#cfa6c4;"></div><div class="abs" style="left:23.72px;top:2.13px;width:8.01px;height:4.45px;background:#e8c840;"></div><div class="abs" style="left:31.62px;top:2.13px;width:2.47px;height:3.66px;background:#c8a0b0;"></div><div class="abs" style="left:23.72px;top:6.48px;width:8.01px;height:5.63px;background:#c9a92c;"></div><div class="abs" style="left:31.62px;top:5.69px;width:2.47px;height:7.21px;background:#f8d800;"></div><div class="abs" style="left:0.00px;top:5.30px;width:4.84px;height:4.45px;background:#e2b47c;"></div><div class="abs" style="left:4.74px;top:5.30px;width:5.24px;height:3.66px;background:#dca890;"></div><div class="abs" style="left:9.88px;top:5.69px;width:3.26px;height:4.05px;background:#d8b868;"></div><div class="abs" style="left:13.04px;top:5.69px;width:3.66px;height:4.45px;background:#b88cd0;"></div><div class="abs" style="left:0.00px;top:9.64px;width:4.84px;height:3.26px;background:#b88cc8;"></div><div class="abs" style="left:4.74px;top:8.85px;width:5.24px;height:4.05px;background:#c89cbc;"></div><div class="abs" style="left:9.88px;top:9.64px;width:3.26px;height:3.26px;background:#9068d0;"></div><div class="abs" style="left:13.04px;top:10.04px;width:3.66px;height:2.87px;background:#a884cc;"></div><div class="abs" style="left:16.60px;top:10.04px;width:7.21px;height:2.87px;background:#e0b850;"></div><div class="abs" style="left:23.72px;top:12.02px;width:8.01px;height:1.84px;background:#d4b040;"></div><div class="abs" style="left:0.00px;top:12.81px;width:2.87px;height:3.10px;background:#1a1060;"></div><div class="abs" style="left:2.77px;top:12.81px;width:4.45px;height:3.10px;background:#e8c050;"></div><div class="abs" style="left:7.11px;top:12.81px;width:1.68px;height:3.10px;background:#9060c0;"></div><div class="abs" style="left:8.70px;top:12.81px;width:4.05px;height:3.10px;background:#e4bc54;"></div><div class="abs" style="left:12.65px;top:12.81px;width:6.42px;height:3.10px;background:#f0d040;"></div><div class="abs" style="left:18.97px;top:12.81px;width:4.84px;height:3.10px;background:#d8a080;"></div><div class="abs" style="left:23.72px;top:13.75px;width:10.38px;height:2.16px;background:#c090c8;"></div></div>
<svg style="left:47.2px;top:389.8px" width="9" height="9" viewBox="0 0 9 9"><path d="M4.5 0.7 L5.6 3.2 L8.3 3.5 L6.3 5.3 L6.9 8 L4.5 6.6 L2.1 8 L2.7 5.3 L0.7 3.5 L3.4 3.2 Z" fill="none" stroke="#8fa4d6" stroke-width="0.6" stroke-linejoin="round"/></svg>
<div class="t lbl" style="left:58.2px;top:392px;">Rectangle Pixelation</div>

<div class="abs" style="left:273.3px;top:310px;width:1px;height:146.4px;background:#8c8b90;"></div>
<svg style="left:269.3px;top:295.7px" width="9" height="16" viewBox="0 0 9 16"><path d="M1.9 0.6 H7.1 Q8.2 0.6 8.2 1.7 V10.8 L4.5 15 L0.8 10.8 V1.7 Q0.8 0.6 1.9 0.6 Z" fill="#6c6b70" stroke="#bebdc2" stroke-width="0.7"/></svg>
<!-- meters -->
<div class="abs" style="left:640.4px;top:293px;width:17.6px;height:163px;background:#0e0d10;"></div>
<div class="abs" style="left:643.3px;top:298.4px;width:10.7px;height:9.6px;background:#151418;border:0.6px solid #1f1e23;box-sizing:border-box;border-radius:1.6px;"></div>
<div class="abs" style="left:645.5px;top:300.4px;width:2.8px;height:6.2px;background:#2a292e;"></div>
<div class="abs" style="left:649.6px;top:300.4px;width:2.8px;height:6.2px;background:#2a292e;"></div>
<div class="abs" style="left:643.8px;top:311px;width:9.8px;height:143px;background:#141317;border-radius:1.4px;"></div>
<div class="abs" style="left:645.2px;top:313px;width:3.1px;height:139px;background:#222126;"></div>
<div class="abs" style="left:649.6px;top:313px;width:3.1px;height:139px;background:#222126;"></div>
<!--/TIMELINE-->
<!--BOTTOM-->
<!-- bottom toolbar -->
<div class="btn" style="left:8px;width:44.9px;"><svg style="left:5.6px;top:3.8px" width="8" height="8" viewBox="0 0 8 8"><rect x="1.5" y="0.5" width="5" height="3.2" rx="1.2" fill="none" stroke="#fff" stroke-width="1"/><rect x="0.5" y="3.6" width="7" height="3.9" rx="1.2" fill="#fff"/><circle cx="6" cy="5.6" r="0.7" fill="#29282d"/></svg><div class="t" style="left:15.7px;">Inspect</div></div>
<div class="abs" style="left:60.2px;top:461px;width:0.8px;height:16px;background:#2a292e;"></div>
<div class="btn" style="left:68.2px;width:46px;"><svg style="left:5.3px;top:4px" width="9" height="8" viewBox="0 0 9 8"><path d="M0.6 2.8 H2 L4 1 V7 L2 5.2 H0.6 Z" fill="none" stroke="#e4e4e8" stroke-width="0.7" stroke-linejoin="round"/><path d="M5.4 2.4 V5.6 M6.8 1.4 V6.6" stroke="#e4e4e8" stroke-width="0.7" stroke-linecap="round"/></svg><div class="t" style="left:16.8px;">Volume</div></div>
<div class="btn" style="left:120.4px;width:47.4px;"><svg style="left:5.2px;top:3.7px" width="9" height="8" viewBox="0 0 9 8"><path d="M2.2 0.8 L0.6 4 L2.2 7.2 M6.8 0.8 L8.4 4 L6.8 7.2" fill="none" stroke="#e4e4e8" stroke-width="0.7" stroke-linejoin="round" stroke-linecap="round"/><path d="M4.5 1 L6.6 4 L4.5 7 L2.4 4 Z" fill="none" stroke="#e4e4e8" stroke-width="0.7" stroke-linejoin="round"/></svg><div class="t" style="left:16.4px;">Animate</div></div>
<div class="btn" style="left:174px;width:50px;"><svg style="left:5.4px;top:4px" width="8" height="8" viewBox="0 0 8 8"><rect x="0.5" y="0.5" width="2.8" height="2.8" rx="0.7" fill="none" stroke="#e4e4e8" stroke-width="0.7"/><rect x="4.5" y="0.5" width="2.8" height="2.8" rx="0.7" fill="none" stroke="#e4e4e8" stroke-width="0.7"/><rect x="0.5" y="4.5" width="2.8" height="2.8" rx="0.7" fill="none" stroke="#e4e4e8" stroke-width="0.7"/><rect x="4.5" y="4.5" width="2.8" height="2.8" rx="0.7" fill="none" stroke="#e4e4e8" stroke-width="0.7"/></svg><div class="t" style="left:15.6px;">Multicam</div></div>
<svg style="left:492px;top:462.8px" width="11" height="12" viewBox="0 0 11 12"><path d="M1 2.6 H10 M3.8 2.4 V1.4 Q3.8 0.8 4.4 0.8 H6.6 Q7.2 0.8 7.2 1.4 V2.4 M2 2.8 L2.5 10.2 Q2.6 11.2 3.6 11.2 H7.4 Q8.4 11.2 8.5 10.2 L9 2.8 M4.1 4.4 V9.4 M5.5 4.4 V9.4 M6.9 4.4 V9.4" fill="none" stroke="#34333a" stroke-width="0.8" stroke-linecap="round"/></svg>
<svg style="left:525px;top:462.8px" width="12" height="12" viewBox="0 0 12 12"><circle cx="6.1" cy="6" r="5" fill="none" stroke="#dcdce0" stroke-width="0.9"/><path d="M3.9 6.2 L5.5 7.9 L8.3 4.2" fill="none" stroke="#dcdce0" stroke-width="0.9" stroke-linecap="round" stroke-linejoin="round"/></svg>
<svg style="left:559.8px;top:462.8px" width="14" height="12" viewBox="0 0 14 12"><rect x="1" y="2" width="12" height="8.2" rx="1.8" fill="none" stroke="#34333a" stroke-width="0.8"/><path d="M7 0.6 V11.4" stroke="#34333a" stroke-width="0.8" stroke-linecap="round"/></svg>
<svg style="left:595.8px;top:462.8px" width="14" height="12" viewBox="0 0 14 12"><path d="M7.2 2 H11 Q12.8 2 12.8 3.8 V8.4 Q12.8 10.2 11 10.2 H7.2" fill="none" stroke="#34333a" stroke-width="0.8"/><path d="M7.2 2 H3 Q1.2 2 1.2 3.8 V8.4 Q1.2 10.2 3 10.2 H7.2" fill="none" stroke="#2c2b31" stroke-width="0.7" stroke-dasharray="1.2 0.9"/><path d="M7.2 0.6 V11.4 M1.6 6 H5.6 M4.2 4.4 L5.8 6 L4.2 7.6" fill="none" stroke="#34333a" stroke-width="0.8" stroke-linecap="round" stroke-linejoin="round"/></svg>
<svg style="left:632.3px;top:462.8px" width="14" height="12" viewBox="0 0 14 12"><path d="M6.8 2 H3 Q1.2 2 1.2 3.8 V8.4 Q1.2 10.2 3 10.2 H6.8" fill="none" stroke="#34333a" stroke-width="0.8"/><path d="M6.8 2 H11 Q12.8 2 12.8 3.8 V8.4 Q12.8 10.2 11 10.2 H6.8" fill="none" stroke="#2c2b31" stroke-width="0.7" stroke-dasharray="1.2 0.9"/><path d="M6.8 0.6 V11.4 M12.4 6 H8.4 M9.8 4.4 L8.2 6 L9.8 7.6" fill="none" stroke="#34333a" stroke-width="0.8" stroke-linecap="round" stroke-linejoin="round"/></svg>
<div class="abs" style="left:247px;top:487.6px;width:164.4px;height:2.6px;background:#fff;border-radius:1.3px;"></div>
<!--/BOTTOM-->
</div>
</body>
</html>
